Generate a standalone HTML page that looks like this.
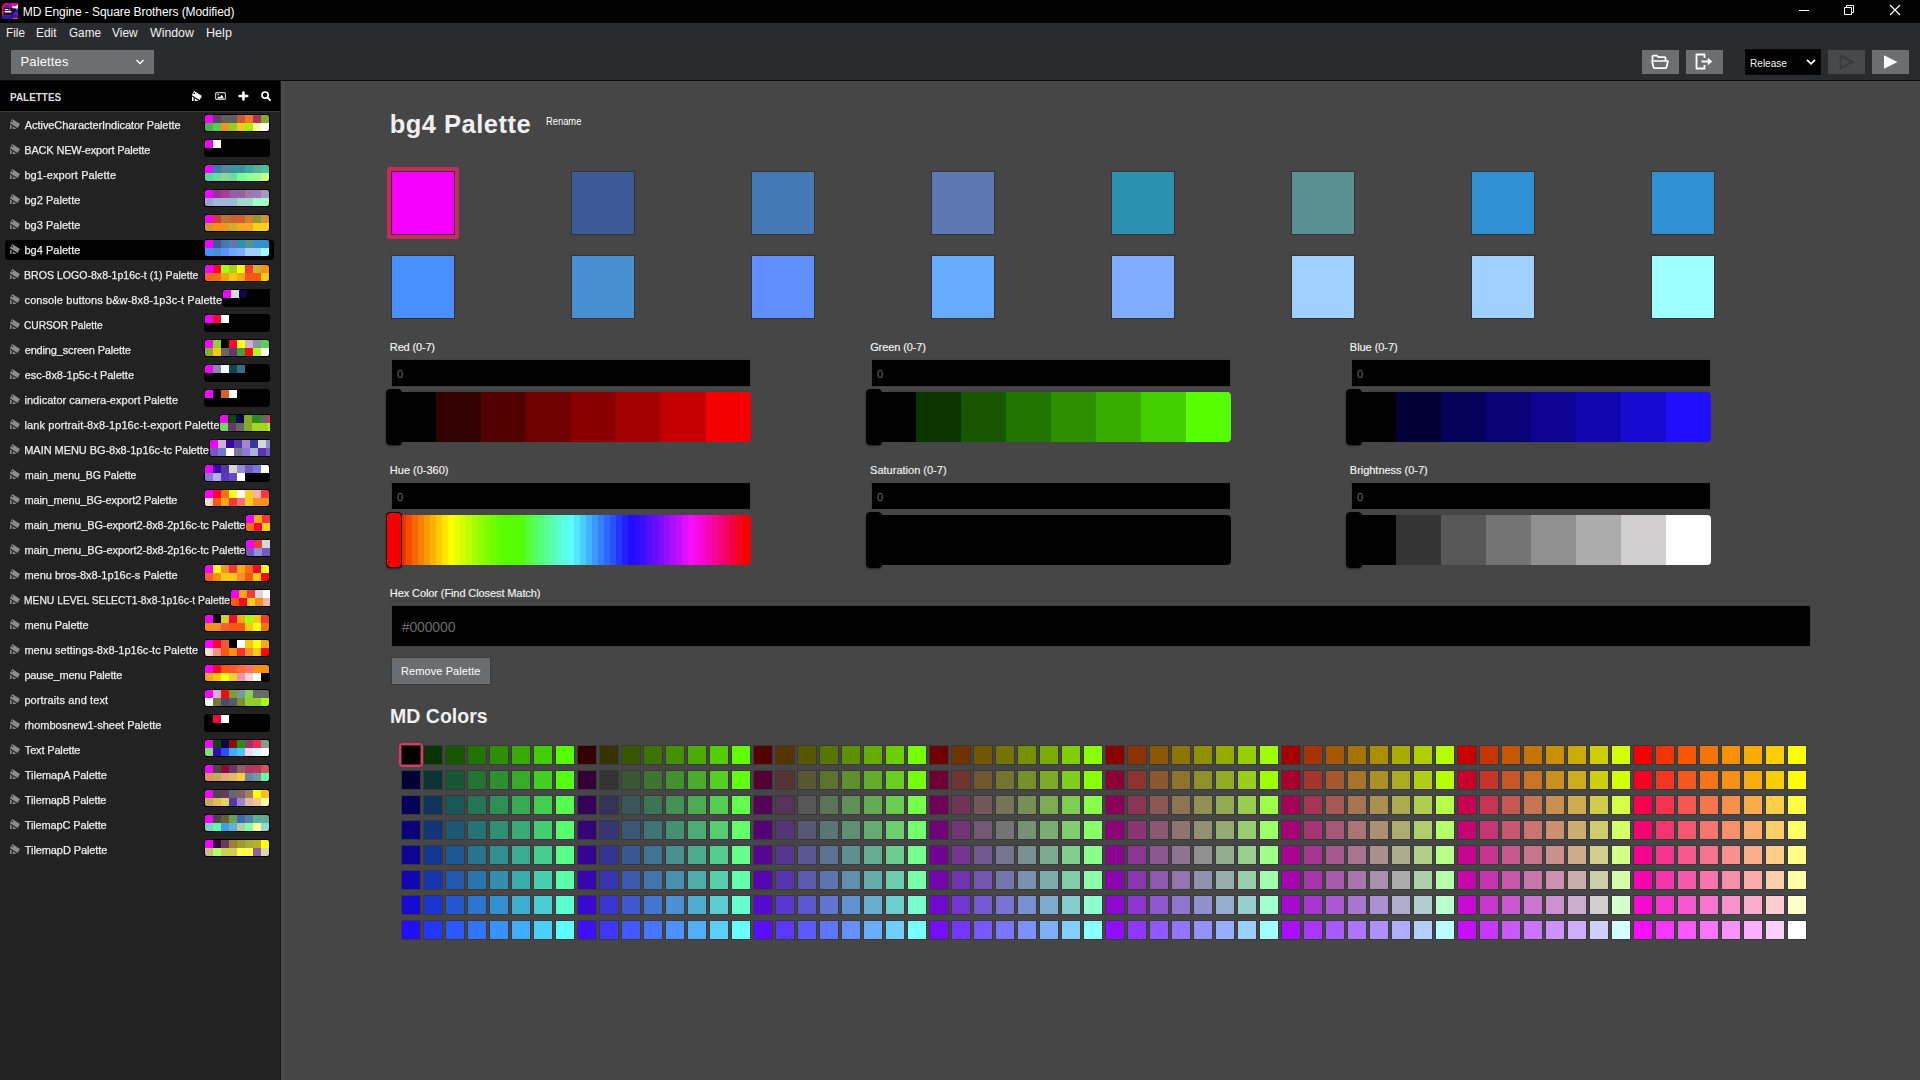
<!DOCTYPE html>
<html><head><meta charset="utf-8"><title>MD Engine - Square Brothers (Modified)</title>
<style>
*{box-sizing:border-box;margin:0;padding:0}
html,body{width:1920px;height:1080px;overflow:hidden;background:#464646}
body{font-family:"Liberation Sans",sans-serif;color:#eaeaea;position:relative;font-size:11px}
.a{position:absolute;white-space:nowrap}
#title{left:0;top:0;width:1920px;height:23px;background:#000}
#bar{left:0;top:23px;width:1920px;height:57px;background:#2a2b2e}
#barline{left:0;top:80px;width:1920px;height:1px;background:#0c0c0c}
#side{left:0;top:81px;width:280px;height:999px;background:#222;overflow:hidden}
#sideline{left:280px;top:81px;width:1px;height:999px;background:#171717}
#handle{left:281px;top:81px;width:4px;height:999px;background:#4a4a4a}
#shead{left:0;top:0;width:280px;height:30px;background:#000}
#sheadline{left:0;top:30px;width:280px;height:1px;background:#363636}
.t12{font-size:12px;line-height:14px}
.t13{font-size:13px;line-height:16px}
.t11{font-size:11px;line-height:14px}
.menu{top:25px;color:#f0f0f0}
.btn{background:#6c6f71;height:24px;top:50px}
.row{left:0;width:270px;height:25px;overflow:hidden}
.row .ic{left:10px;top:7px;width:10px;height:10px;fill:#8c8c8c}
.row .nm{left:25px;top:6px;font-size:11px;line-height:14px;color:#ececec;will-change:transform;-webkit-text-stroke:.25px #ececec}
.th{top:2px;width:66px;height:18px;border:1px solid #000;border-radius:3px;overflow:hidden;background:#000}
.th i{position:absolute;width:8px;height:8px}
.sel{left:5px;width:269px;height:20px;background:#000;border-radius:3px}
.sw{width:64px;height:64px;border:1px solid #333}
.lbl{font-size:11px;line-height:14px;color:#f4f4f4;-webkit-text-stroke:.15px #f4f4f4}
.inp{width:360px;height:28px;background:#000;border:1px solid #414141}
.inp span{position:absolute;left:5px;top:7px;font-size:11px;line-height:14px;color:#6c6c6c}
.sl{width:360px;height:50px;border-radius:0 4px 4px 0;overflow:hidden}
.sl i{position:absolute;top:0;height:50px}
.kn{width:16px;height:56px;border-radius:4px;background:#000;border:1px solid #000;box-shadow:0 1px 2px rgba(0,0,0,.5)}
.g{width:20px;height:20px;border:1px solid #393939}
</style></head><body>

<div id="title" class="a">
<svg class="a" style="left:2px;top:3px" width="16" height="16" viewBox="0 0 16 16"><defs><linearGradient id="lg" x1="0" y1="0" x2="0.250" y2="1"><stop offset="0" stop-color="#c8108c"/><stop offset=".35" stop-color="#8a1290"/><stop offset=".7" stop-color="#4a14a4"/><stop offset="1" stop-color="#3414a8"/></linearGradient><linearGradient id="lg2" x1="0" y1="1" x2="1" y2="0"><stop offset=".45" stop-color="#2a10a0" stop-opacity="0"/><stop offset=".6" stop-color="#7020c0" stop-opacity=".8"/><stop offset=".75" stop-color="#b010b0" stop-opacity="0"/></linearGradient></defs><path d="M0 16V5a5 5 0 0 1 5-5h11v16z" fill="url(#lg)"/><path d="M0 16V5a5 5 0 0 1 5-5h11v16z" fill="url(#lg2)"/><path d="M9 .2h7v3H9z" fill="#e808a8" opacity=".8"/><path d="M1.800 4.800 15.600 5.400 15 6.800 9.500 11.800 1.800 12z" fill="#160818" opacity=".88"/><path d="M.6 12.500V5A4.400 4.400 0 0 1 5 .6h1" fill="none" stroke="#ff1c1c" stroke-width="1.200"/><path d="M10 3.400q1.500-1 3 0 1.500-.9 3-1.600V5.200H11q-1-.5-1-1.800z" fill="#fff"/><path d="M13 5.200h3V6l-1 .8z" fill="#40f0d0"/><path d="M2.800 6h4.400q1 0 1 1.200H2.800zM2.600 8h5.800q1.200 0 1.400 1.400H2.600z" fill="#fff" opacity=".92"/><circle cx="6.400" cy="6.900" r=".7" fill="#160818"/><rect x="11" y="15" width="5" height="1" fill="#ff4a68"/></svg>
<div class="a" style="left:24px;top:4.800px;font-size:12px;line-height:14px;color:#fff"><span id="k_title" style="position:relative;letter-spacing:-0.066px;left:-1.26px;">MD Engine - Square Brothers (Modified)</span></div>
<svg class="a" style="left:1794px;top:0" width="120" height="23" viewBox="0 0 120 23" fill="none" stroke="#fff" stroke-width="1"><path d="M5 10.500h10"/><path d="M50.500 7.500h7v7h-7z"/><path d="M52.500 7.500v-2h7v7h-2"/><path d="M96 5l10 10M106 5l-10 10" stroke-width="1.200"/></svg>
</div>
<div id="bar" class="a"></div><div id="barline" class="a"></div>
<div class="a t13 menu" style="left:6px"><span id="k_menu0" style="position:relative;left:-0.23px;display:inline-block;transform:scaleX(0.9071);transform-origin:0 50%;">File</span></div>
<div class="a t13 menu" style="left:36px"><span id="k_menu1" style="position:relative;left:-0.23px;display:inline-block;transform:scaleX(0.9130);transform-origin:0 50%;">Edit</span></div>
<div class="a t13 menu" style="left:69px"><span id="k_menu2" style="position:relative;left:-0.33px;display:inline-block;transform:scaleX(0.9015);transform-origin:0 50%;">Game</span></div>
<div class="a t13 menu" style="left:112px"><span id="k_menu3" style="position:relative;left:-0.27px;display:inline-block;transform:scaleX(0.9180);transform-origin:0 50%;">View</span></div>
<div class="a t13 menu" style="left:150px"><span id="k_menu4" style="position:relative;left:-0.51px;display:inline-block;transform:scaleX(0.9489);transform-origin:0 50%;">Window</span></div>
<div class="a t13 menu" style="left:206px"><span id="k_menu5" style="position:relative;left:-0.38px;display:inline-block;transform:scaleX(0.9679);transform-origin:0 50%;">Help</span></div>
<div class="a btn" style="left:11px;width:143px"></div>
<div class="a t13" style="left:21px;top:54px;color:#fff"><span id="k_dd" style="position:relative;letter-spacing:0.135px;left:-0.44px;">Palettes</span></div>
<svg class="a" style="left:135px;top:58px" width="10" height="8" viewBox="0 0 10 8" fill="none" stroke="#fff" stroke-width="1.4"><path d="M1.500 2l3.500 3.500L8.500 2"/></svg>
<div class="a btn" style="left:1642px;width:37px"></div>
<svg class="a" style="left:1651px;top:54px" width="18" height="16" viewBox="0 0 18 16" fill="none" stroke="#fff" stroke-width="1.700" stroke-linejoin="round"><path d="M1.500 7V2.600q0-1 1-1H6l1.300 1.600h6.200q1 0 1 1V7"/><path d="M1 7h16l-1.500 6.300q-.2.900-1.200.9H3.700q-1 0-1.200-.9z"/></svg>
<div class="a btn" style="left:1686px;width:37px"></div>
<svg class="a" style="left:1695px;top:53px" width="20" height="17" viewBox="0 0 20 17" fill="none" stroke="#fff" stroke-width="1.800" stroke-linejoin="round"><path d="M9.500 5V1.500h-8v14h8V12"/><path d="M6.500 8.500H15" stroke-width="2"/><path d="M12.800 4.800l4.600 3.700-4.600 3.700z" fill="#fff" stroke="none"/></svg>
<div class="a" style="left:1745px;top:49px;width:76px;height:26px;background:#000;border:1px solid #070707"></div>
<div class="a t11" style="left:1749px;top:56px;color:#f2f2f2"><span id="k_rel" style="position:relative;left:0.64px;display:inline-block;transform:scaleX(0.9163);transform-origin:0 50%;">Release</span></div>
<svg class="a" style="left:1806px;top:58px" width="10" height="8" viewBox="0 0 10 8" fill="none" stroke="#fff" stroke-width="1.800"><path d="M1 1.800l4 4 4-4"/></svg>
<div class="a btn" style="left:1828px;width:37px;background:#47494b"></div>
<svg class="a" style="left:1838px;top:54px" width="18" height="16" viewBox="0 0 18 16" fill="none" stroke="#37393b" stroke-width="1.600"><path d="M2.500 1.500l12 6.500-12 6.500z"/></svg>
<div class="a btn" style="left:1872px;width:37px"></div>
<svg class="a" style="left:1882px;top:54px" width="18" height="16" viewBox="0 0 18 16" fill="#fff"><path d="M2 1.200l13.500 6.800L2 14.800z"/></svg>
<div id="side" class="a"><div id="shead" class="a"></div><div id="sheadline" class="a"></div>
<div class="a" style="left:10px;top:9px;font-size:11px;line-height:14px;font-weight:bold;color:#dedede"><span id="k_ph" style="position:relative;left:-0.51px;display:inline-block;transform:scaleX(0.9036);transform-origin:0 50%;">PALETTES</span></div>
<svg class="a" style="left:192px;top:10px;fill:#fff" width="10" height="10" viewBox="0 0 10 10"><path fill-rule="evenodd" d="M2.200 0 10 5 7.600 9-.2 4zM2.300 1.600a.7.700 0 1 0 .01 0z"/><path d="M0 5.400 1.600 6.500V10H0zM2.600 7.200 6.200 9.500 5.200 10H2.900z"/></svg>
<svg class="a" style="left:215px;top:11px" width="11" height="8" viewBox="0 0 11 8"><rect x=".6" y=".6" width="9.800" height="6.800" rx="1" fill="none" stroke="#c4c4c4" stroke-width="1.200"/><path d="M2 6.500 3.800 4.200 5 5.200 6.800 2.800 9 6.500z" fill="#fff"/><circle cx="3" cy="2.500" r=".8" fill="#fff"/></svg>
<svg class="a" style="left:238px;top:10px" width="10.800" height="10" viewBox="0 0 11 11" preserveAspectRatio="none" stroke="#fff" stroke-width="2.600" stroke-linecap="round"><path d="M5.500 1.600v7.800M1.600 5.500h7.800"/></svg>
<svg class="a" style="left:261px;top:10px" width="10" height="10" viewBox="0 0 10 10" fill="none" stroke="#fff" stroke-width="1.700" stroke-linecap="round"><circle cx="4.100" cy="4.100" r="3.100"/><path d="M6.500 6.500l2.600 2.600" stroke-width="1.900"/></svg>
<div class="a row" style="top:31px">
<svg class="a ic" viewBox="0 0 10 10"><path fill-rule="evenodd" d="M2.200 0 10 5 7.600 9-.2 4zM2.300 1.600a.7.700 0 1 0 .01 0z"/><path d="M0 5.400 1.600 6.500V10H0zM2.600 7.200 6.200 9.500 5.200 10H2.900z"/></svg>
<div class="a nm"><span id="k_p0" style="position:relative;letter-spacing:-0.066px;left:-0.20px;">ActiveCharacterIndicator Palette</span></div>
<div class="a th" style="left:204px">
<i style="left:0px;top:0px;background:#f600ff"></i>
<i style="left:8px;top:0px;background:#6b3a6b"></i>
<i style="left:16px;top:0px;background:#5e5e5e"></i>
<i style="left:24px;top:0px;background:#5e5e5e"></i>
<i style="left:32px;top:0px;background:#c85a32"></i>
<i style="left:40px;top:0px;background:#f07820"></i>
<i style="left:48px;top:0px;background:#b03060"></i>
<i style="left:56px;top:0px;background:#80b020"></i>
<i style="left:0px;top:8px;background:#50b050"></i>
<i style="left:8px;top:8px;background:#50d050"></i>
<i style="left:16px;top:8px;background:#f89020"></i>
<i style="left:24px;top:8px;background:#90d020"></i>
<i style="left:32px;top:8px;background:#f8c820"></i>
<i style="left:40px;top:8px;background:#a8f000"></i>
<i style="left:48px;top:8px;background:#ffffa0"></i>
<i style="left:56px;top:8px;background:#ffffff"></i>
</div></div>
<div class="a row" style="top:56px">
<svg class="a ic" viewBox="0 0 10 10"><path fill-rule="evenodd" d="M2.200 0 10 5 7.600 9-.2 4zM2.300 1.600a.7.700 0 1 0 .01 0z"/><path d="M0 5.400 1.600 6.500V10H0zM2.600 7.200 6.200 9.500 5.200 10H2.900z"/></svg>
<div class="a nm"><span id="k_p1" style="position:relative;letter-spacing:-0.177px;left:-0.76px;">BACK NEW-export Palette</span></div>
<div class="a th" style="left:204px">
<i style="left:0px;top:0px;background:#f600ff"></i>
<i style="left:8px;top:0px;background:#ffffff"></i>
</div></div>
<div class="a row" style="top:81px">
<svg class="a ic" viewBox="0 0 10 10"><path fill-rule="evenodd" d="M2.200 0 10 5 7.600 9-.2 4zM2.300 1.600a.7.700 0 1 0 .01 0z"/><path d="M0 5.400 1.600 6.500V10H0zM2.600 7.200 6.200 9.500 5.200 10H2.900z"/></svg>
<div class="a nm"><span id="k_p2" style="position:relative;letter-spacing:0.102px;left:-0.64px;">bg1-export Palette</span></div>
<div class="a th" style="left:204px">
<i style="left:0px;top:0px;background:#f600ff"></i>
<i style="left:8px;top:0px;background:#3080a0"></i>
<i style="left:16px;top:0px;background:#6080a0"></i>
<i style="left:24px;top:0px;background:#3098a0"></i>
<i style="left:32px;top:0px;background:#4090a0"></i>
<i style="left:40px;top:0px;background:#38a8a0"></i>
<i style="left:48px;top:0px;background:#60a898"></i>
<i style="left:56px;top:0px;background:#40c898"></i>
<i style="left:0px;top:8px;background:#50d8a0"></i>
<i style="left:8px;top:8px;background:#70d8a0"></i>
<i style="left:16px;top:8px;background:#88d898"></i>
<i style="left:24px;top:8px;background:#70d8a0"></i>
<i style="left:32px;top:8px;background:#78ff98"></i>
<i style="left:40px;top:8px;background:#90ff98"></i>
<i style="left:48px;top:8px;background:#98ff90"></i>
<i style="left:56px;top:8px;background:#d0ff88"></i>
</div></div>
<div class="a row" style="top:106px">
<svg class="a ic" viewBox="0 0 10 10"><path fill-rule="evenodd" d="M2.200 0 10 5 7.600 9-.2 4zM2.300 1.600a.7.700 0 1 0 .01 0z"/><path d="M0 5.400 1.600 6.500V10H0zM2.600 7.200 6.200 9.500 5.200 10H2.900z"/></svg>
<div class="a nm"><span id="k_p3" style="position:relative;letter-spacing:0.034px;left:-0.64px;">bg2 Palette</span></div>
<div class="a th" style="left:204px">
<i style="left:0px;top:0px;background:#f600ff"></i>
<i style="left:8px;top:0px;background:#903898"></i>
<i style="left:16px;top:0px;background:#b03898"></i>
<i style="left:24px;top:0px;background:#9060a0"></i>
<i style="left:32px;top:0px;background:#9860a0"></i>
<i style="left:40px;top:0px;background:#a078a8"></i>
<i style="left:48px;top:0px;background:#a078c0"></i>
<i style="left:56px;top:0px;background:#a898b8"></i>
<i style="left:0px;top:8px;background:#a0a0d8"></i>
<i style="left:8px;top:8px;background:#a0b8d8"></i>
<i style="left:16px;top:8px;background:#a0b8d8"></i>
<i style="left:24px;top:8px;background:#a0b8d8"></i>
<i style="left:32px;top:8px;background:#a0d8d0"></i>
<i style="left:40px;top:8px;background:#a0d8d0"></i>
<i style="left:48px;top:8px;background:#a0ffc8"></i>
<i style="left:56px;top:8px;background:#a0ffc8"></i>
</div></div>
<div class="a row" style="top:131px">
<svg class="a ic" viewBox="0 0 10 10"><path fill-rule="evenodd" d="M2.200 0 10 5 7.600 9-.2 4zM2.300 1.600a.7.700 0 1 0 .01 0z"/><path d="M0 5.400 1.600 6.500V10H0zM2.600 7.200 6.200 9.500 5.200 10H2.900z"/></svg>
<div class="a nm"><span id="k_p4" style="position:relative;letter-spacing:0.034px;left:-0.64px;">bg3 Palette</span></div>
<div class="a th" style="left:204px">
<i style="left:0px;top:0px;background:#f600ff"></i>
<i style="left:8px;top:0px;background:#d83838"></i>
<i style="left:16px;top:0px;background:#b07830"></i>
<i style="left:24px;top:0px;background:#d06030"></i>
<i style="left:32px;top:0px;background:#d06030"></i>
<i style="left:40px;top:0px;background:#d08030"></i>
<i style="left:48px;top:0px;background:#909830"></i>
<i style="left:56px;top:0px;background:#d09830"></i>
<i style="left:0px;top:8px;background:#d09828"></i>
<i style="left:8px;top:8px;background:#f89020"></i>
<i style="left:16px;top:8px;background:#f89020"></i>
<i style="left:24px;top:8px;background:#c8b028"></i>
<i style="left:32px;top:8px;background:#f8a820"></i>
<i style="left:40px;top:8px;background:#f8a820"></i>
<i style="left:48px;top:8px;background:#ffd018"></i>
<i style="left:56px;top:8px;background:#ffd018"></i>
</div></div>
<div class="a sel" style="top:159px"></div>
<div class="a row" style="top:156px">
<svg class="a ic" viewBox="0 0 10 10"><path fill-rule="evenodd" d="M2.200 0 10 5 7.600 9-.2 4zM2.300 1.600a.7.700 0 1 0 .01 0z"/><path d="M0 5.400 1.600 6.500V10H0zM2.600 7.200 6.200 9.500 5.200 10H2.900z"/></svg>
<div class="a nm"><span id="k_p5" style="position:relative;letter-spacing:0.032px;left:-0.63px;">bg4 Palette</span></div>
<div class="a th" style="left:204px">
<i style="left:0px;top:0px;background:#f600ff"></i>
<i style="left:8px;top:0px;background:#3c5a96"></i>
<i style="left:16px;top:0px;background:#4478b4"></i>
<i style="left:24px;top:0px;background:#5e78b4"></i>
<i style="left:32px;top:0px;background:#2c90b0"></i>
<i style="left:40px;top:0px;background:#5a9090"></i>
<i style="left:48px;top:0px;background:#3090d2"></i>
<i style="left:56px;top:0px;background:#3090d2"></i>
<i style="left:0px;top:8px;background:#4890ff"></i>
<i style="left:8px;top:8px;background:#4890d2"></i>
<i style="left:16px;top:8px;background:#6090ff"></i>
<i style="left:24px;top:8px;background:#68acff"></i>
<i style="left:32px;top:8px;background:#80acff"></i>
<i style="left:40px;top:8px;background:#a0d0ff"></i>
<i style="left:48px;top:8px;background:#a0d0ff"></i>
<i style="left:56px;top:8px;background:#a0ffff"></i>
</div></div>
<div class="a row" style="top:181px">
<svg class="a ic" viewBox="0 0 10 10"><path fill-rule="evenodd" d="M2.200 0 10 5 7.600 9-.2 4zM2.300 1.600a.7.700 0 1 0 .01 0z"/><path d="M0 5.400 1.600 6.500V10H0zM2.600 7.200 6.200 9.500 5.200 10H2.900z"/></svg>
<div class="a nm"><span id="k_p6" style="position:relative;left:-0.59px;display:inline-block;transform:scaleX(0.9610);transform-origin:0 50%;">BROS LOGO-8x8-1p16c-t (1) Palette</span></div>
<div class="a th" style="left:204px">
<i style="left:0px;top:0px;background:#f600ff"></i>
<i style="left:8px;top:0px;background:#f80830"></i>
<i style="left:16px;top:0px;background:#a0ff10"></i>
<i style="left:24px;top:0px;background:#a8d020"></i>
<i style="left:32px;top:0px;background:#ffff10"></i>
<i style="left:40px;top:0px;background:#f83838"></i>
<i style="left:48px;top:0px;background:#d0b030"></i>
<i style="left:56px;top:0px;background:#f89010"></i>
<i style="left:0px;top:8px;background:#f86030"></i>
<i style="left:8px;top:8px;background:#f87010"></i>
<i style="left:16px;top:8px;background:#f8a010"></i>
<i style="left:24px;top:8px;background:#f8c810"></i>
<i style="left:32px;top:8px;background:#f8a818"></i>
<i style="left:40px;top:8px;background:#f85810"></i>
<i style="left:48px;top:8px;background:#f85810"></i>
<i style="left:56px;top:8px;background:#f8c810"></i>
</div></div>
<div class="a row" style="top:206px">
<svg class="a ic" viewBox="0 0 10 10"><path fill-rule="evenodd" d="M2.200 0 10 5 7.600 9-.2 4zM2.300 1.600a.7.700 0 1 0 .01 0z"/><path d="M0 5.400 1.600 6.500V10H0zM2.600 7.200 6.200 9.500 5.200 10H2.900z"/></svg>
<div class="a nm"><span id="k_p7" style="position:relative;letter-spacing:0.081px;left:-0.45px;">console buttons b&amp;w-8x8-1p3c-t Palette</span></div>
<div class="a th" style="left:222px">
<i style="left:0px;top:0px;background:#f600ff"></i>
<i style="left:8px;top:0px;background:#d8d8d8"></i>
<i style="left:16px;top:0px;background:#080848"></i>
</div></div>
<div class="a row" style="top:231px">
<svg class="a ic" viewBox="0 0 10 10"><path fill-rule="evenodd" d="M2.200 0 10 5 7.600 9-.2 4zM2.300 1.600a.7.700 0 1 0 .01 0z"/><path d="M0 5.400 1.600 6.500V10H0zM2.600 7.200 6.200 9.500 5.200 10H2.900z"/></svg>
<div class="a nm"><span id="k_p8" style="position:relative;left:-0.62px;display:inline-block;transform:scaleX(0.9253);transform-origin:0 50%;">CURSOR Palette</span></div>
<div class="a th" style="left:204px">
<i style="left:0px;top:0px;background:#f600ff"></i>
<i style="left:8px;top:0px;background:#f80830"></i>
<i style="left:16px;top:0px;background:#ffffff"></i>
</div></div>
<div class="a row" style="top:256px">
<svg class="a ic" viewBox="0 0 10 10"><path fill-rule="evenodd" d="M2.200 0 10 5 7.600 9-.2 4zM2.300 1.600a.7.700 0 1 0 .01 0z"/><path d="M0 5.400 1.600 6.500V10H0zM2.600 7.200 6.200 9.500 5.200 10H2.900z"/></svg>
<div class="a nm"><span id="k_p9" style="position:relative;letter-spacing:-0.158px;left:-0.34px;">ending_screen Palette</span></div>
<div class="a th" style="left:204px">
<i style="left:0px;top:0px;background:#f600ff"></i>
<i style="left:8px;top:0px;background:#90d030"></i>
<i style="left:24px;top:0px;background:#f80838"></i>
<i style="left:32px;top:0px;background:#ffff10"></i>
<i style="left:40px;top:0px;background:#d0b0d0"></i>
<i style="left:48px;top:0px;background:#8898a0"></i>
<i style="left:56px;top:0px;background:#58d058"></i>
<i style="left:0px;top:8px;background:#88b030"></i>
<i style="left:8px;top:8px;background:#ffc810"></i>
<i style="left:16px;top:8px;background:#686868"></i>
<i style="left:24px;top:8px;background:#683868"></i>
<i style="left:32px;top:8px;background:#40a040"></i>
<i style="left:40px;top:8px;background:#f80808"></i>
<i style="left:48px;top:8px;background:#b0ff10"></i>
<i style="left:56px;top:8px;background:#ffffff"></i>
</div></div>
<div class="a row" style="top:281px">
<svg class="a ic" viewBox="0 0 10 10"><path fill-rule="evenodd" d="M2.200 0 10 5 7.600 9-.2 4zM2.300 1.600a.7.700 0 1 0 .01 0z"/><path d="M0 5.400 1.600 6.500V10H0zM2.600 7.200 6.200 9.500 5.200 10H2.900z"/></svg>
<div class="a nm"><span id="k_p10" style="position:relative;letter-spacing:-0.034px;left:-0.34px;">esc-8x8-1p5c-t Palette</span></div>
<div class="a th" style="left:204px">
<i style="left:0px;top:0px;background:#f600ff"></i>
<i style="left:8px;top:0px;background:#8888a8"></i>
<i style="left:16px;top:0px;background:#ffffff"></i>
<i style="left:24px;top:0px;background:#0c4848"></i>
<i style="left:32px;top:0px;background:#406888"></i>
</div></div>
<div class="a row" style="top:306px">
<svg class="a ic" viewBox="0 0 10 10"><path fill-rule="evenodd" d="M2.200 0 10 5 7.600 9-.2 4zM2.300 1.600a.7.700 0 1 0 .01 0z"/><path d="M0 5.400 1.600 6.500V10H0zM2.600 7.200 6.200 9.500 5.200 10H2.900z"/></svg>
<div class="a nm"><span id="k_p11" style="position:relative;letter-spacing:0.023px;left:-0.54px;">indicator camera-export Palette</span></div>
<div class="a th" style="left:204px">
<i style="left:0px;top:0px;background:#f600ff"></i>
<i style="left:16px;top:0px;background:#d86030"></i>
<i style="left:24px;top:0px;background:#ffffff"></i>
</div></div>
<div class="a row" style="top:331px">
<svg class="a ic" viewBox="0 0 10 10"><path fill-rule="evenodd" d="M2.200 0 10 5 7.600 9-.2 4zM2.300 1.600a.7.700 0 1 0 .01 0z"/><path d="M0 5.400 1.600 6.500V10H0zM2.600 7.200 6.200 9.500 5.200 10H2.900z"/></svg>
<div class="a nm"><span id="k_p12" style="position:relative;letter-spacing:0.112px;left:-0.64px;">lank portrait-8x8-1p16c-t-export Palette</span></div>
<div class="a th" style="left:219px">
<i style="left:0px;top:0px;background:#f600ff"></i>
<i style="left:8px;top:0px;background:#0c4808"></i>
<i style="left:16px;top:0px;background:#080848"></i>
<i style="left:24px;top:0px;background:#88a828"></i>
<i style="left:32px;top:0px;background:#289010"></i>
<i style="left:40px;top:0px;background:#686868"></i>
<i style="left:48px;top:0px;background:#f82858"></i>
<i style="left:56px;top:0px;background:#f82858"></i>
<i style="left:0px;top:8px;background:#70d868"></i>
<i style="left:8px;top:8px;background:#683868"></i>
<i style="left:16px;top:8px;background:#686868"></i>
<i style="left:24px;top:8px;background:#88a828"></i>
<i style="left:32px;top:8px;background:#a0d820"></i>
<i style="left:40px;top:8px;background:#a0d820"></i>
<i style="left:48px;top:8px;background:#b0ff10"></i>
<i style="left:56px;top:8px;background:#b0ff10"></i>
</div></div>
<div class="a row" style="top:356px">
<svg class="a ic" viewBox="0 0 10 10"><path fill-rule="evenodd" d="M2.200 0 10 5 7.600 9-.2 4zM2.300 1.600a.7.700 0 1 0 .01 0z"/><path d="M0 5.400 1.600 6.500V10H0zM2.600 7.200 6.200 9.500 5.200 10H2.900z"/></svg>
<div class="a nm"><span id="k_p13" style="position:relative;letter-spacing:-0.054px;left:-0.76px;">MAIN MENU BG-8x8-1p16c-tc Palette</span></div>
<div class="a th" style="left:209px">
<i style="left:0px;top:0px;background:#f600ff"></i>
<i style="left:8px;top:0px;background:#d0b0d0"></i>
<i style="left:16px;top:0px;background:#3808a0"></i>
<i style="left:24px;top:0px;background:#5838a0"></i>
<i style="left:32px;top:0px;background:#a088d0"></i>
<i style="left:40px;top:0px;background:#3838a0"></i>
<i style="left:48px;top:0px;background:#d8d8d8"></i>
<i style="left:56px;top:0px;background:#8890d8"></i>
<i style="left:0px;top:8px;background:#7858c0"></i>
<i style="left:8px;top:8px;background:#7078d8"></i>
<i style="left:16px;top:8px;background:#ffffff"></i>
<i style="left:24px;top:8px;background:#787890"></i>
<i style="left:32px;top:8px;background:#9078d8"></i>
<i style="left:40px;top:8px;background:#b0b0d8"></i>
<i style="left:48px;top:8px;background:#5838b0"></i>
<i style="left:56px;top:8px;background:#7858c0"></i>
</div></div>
<div class="a row" style="top:381px">
<svg class="a ic" viewBox="0 0 10 10"><path fill-rule="evenodd" d="M2.200 0 10 5 7.600 9-.2 4zM2.300 1.600a.7.700 0 1 0 .01 0z"/><path d="M0 5.400 1.600 6.500V10H0zM2.600 7.200 6.200 9.500 5.200 10H2.900z"/></svg>
<div class="a nm"><span id="k_p14" style="position:relative;left:-0.41px;display:inline-block;transform:scaleX(0.9542);transform-origin:0 50%;">main_menu_BG Palette</span></div>
<div class="a th" style="left:204px">
<i style="left:0px;top:0px;background:#f600ff"></i>
<i style="left:8px;top:0px;background:#3808b0"></i>
<i style="left:16px;top:0px;background:#5838a8"></i>
<i style="left:24px;top:0px;background:#d8d8d0"></i>
<i style="left:32px;top:0px;background:#9090d8"></i>
<i style="left:40px;top:0px;background:#7858c0"></i>
<i style="left:48px;top:0px;background:#7878e0"></i>
<i style="left:56px;top:0px;background:#ffffff"></i>
<i style="left:0px;top:8px;background:#8878d8"></i>
<i style="left:8px;top:8px;background:#b0b0e0"></i>
<i style="left:16px;top:8px;background:#5838c0"></i>
<i style="left:24px;top:8px;background:#6848c0"></i>
<i style="left:32px;top:8px;background:#ffffff"></i>
</div></div>
<div class="a row" style="top:406px">
<svg class="a ic" viewBox="0 0 10 10"><path fill-rule="evenodd" d="M2.200 0 10 5 7.600 9-.2 4zM2.300 1.600a.7.700 0 1 0 .01 0z"/><path d="M0 5.400 1.600 6.500V10H0zM2.600 7.200 6.200 9.500 5.200 10H2.900z"/></svg>
<div class="a nm"><span id="k_p15" style="position:relative;letter-spacing:-0.153px;left:-0.60px;">main_menu_BG-export2 Palette</span></div>
<div class="a th" style="left:204px">
<i style="left:0px;top:0px;background:#f600ff"></i>
<i style="left:8px;top:0px;background:#f80830"></i>
<i style="left:16px;top:0px;background:#f87010"></i>
<i style="left:24px;top:0px;background:#ffff10"></i>
<i style="left:32px;top:0px;background:#ffffff"></i>
<i style="left:40px;top:0px;background:#ffd018"></i>
<i style="left:48px;top:0px;background:#f8b0b0"></i>
<i style="left:56px;top:0px;background:#f83838"></i>
<i style="left:0px;top:8px;background:#ffd8d0"></i>
<i style="left:8px;top:8px;background:#f85810"></i>
<i style="left:16px;top:8px;background:#f8a818"></i>
<i style="left:24px;top:8px;background:#f83838"></i>
<i style="left:32px;top:8px;background:#f87078"></i>
<i style="left:40px;top:8px;background:#ffd018"></i>
<i style="left:48px;top:8px;background:#f89030"></i>
<i style="left:56px;top:8px;background:#f89010"></i>
</div></div>
<div class="a row" style="top:431px">
<svg class="a ic" viewBox="0 0 10 10"><path fill-rule="evenodd" d="M2.200 0 10 5 7.600 9-.2 4zM2.300 1.600a.7.700 0 1 0 .01 0z"/><path d="M0 5.400 1.600 6.500V10H0zM2.600 7.200 6.200 9.500 5.200 10H2.900z"/></svg>
<div class="a nm"><span id="k_p16" style="position:relative;letter-spacing:-0.083px;left:-0.60px;">main_menu_BG-export2-8x8-2p16c-tc Palette</span></div>
<div class="a th" style="left:245px">
<i style="left:0px;top:0px;background:#f600ff"></i>
<i style="left:8px;top:0px;background:#f8a818"></i>
<i style="left:16px;top:0px;background:#f83838"></i>
<i style="left:24px;top:0px;background:#ffff10"></i>
<i style="left:32px;top:0px;background:#ffffff"></i>
<i style="left:40px;top:0px;background:#ffd018"></i>
<i style="left:48px;top:0px;background:#f8b0b0"></i>
<i style="left:56px;top:0px;background:#f83838"></i>
<i style="left:0px;top:8px;background:#f87010"></i>
<i style="left:8px;top:8px;background:#f80830"></i>
<i style="left:16px;top:8px;background:#ffd018"></i>
<i style="left:24px;top:8px;background:#f83838"></i>
<i style="left:32px;top:8px;background:#f87078"></i>
<i style="left:40px;top:8px;background:#ffd018"></i>
<i style="left:48px;top:8px;background:#f89030"></i>
<i style="left:56px;top:8px;background:#f89010"></i>
</div></div>
<div class="a row" style="top:456px">
<svg class="a ic" viewBox="0 0 10 10"><path fill-rule="evenodd" d="M2.200 0 10 5 7.600 9-.2 4zM2.300 1.600a.7.700 0 1 0 .01 0z"/><path d="M0 5.400 1.600 6.500V10H0zM2.600 7.200 6.200 9.500 5.200 10H2.900z"/></svg>
<div class="a nm"><span id="k_p17" style="position:relative;letter-spacing:-0.083px;left:-0.60px;">main_menu_BG-export2-8x8-2p16c-tc Palette</span></div>
<div class="a th" style="left:245px">
<i style="left:0px;top:0px;background:#f600ff"></i>
<i style="left:8px;top:0px;background:#f83838"></i>
<i style="left:16px;top:0px;background:#d8d8d8"></i>
<i style="left:24px;top:0px;background:#ffff10"></i>
<i style="left:32px;top:0px;background:#ffffff"></i>
<i style="left:40px;top:0px;background:#ffd018"></i>
<i style="left:48px;top:0px;background:#f8b0b0"></i>
<i style="left:56px;top:0px;background:#f83838"></i>
<i style="left:0px;top:8px;background:#7858c0"></i>
<i style="left:8px;top:8px;background:#9090d8"></i>
<i style="left:16px;top:8px;background:#7858c0"></i>
<i style="left:24px;top:8px;background:#f83838"></i>
<i style="left:32px;top:8px;background:#f87078"></i>
<i style="left:40px;top:8px;background:#ffd018"></i>
<i style="left:48px;top:8px;background:#f89030"></i>
<i style="left:56px;top:8px;background:#f89010"></i>
</div></div>
<div class="a row" style="top:481px">
<svg class="a ic" viewBox="0 0 10 10"><path fill-rule="evenodd" d="M2.200 0 10 5 7.600 9-.2 4zM2.300 1.600a.7.700 0 1 0 .01 0z"/><path d="M0 5.400 1.600 6.500V10H0zM2.600 7.200 6.200 9.500 5.200 10H2.900z"/></svg>
<div class="a nm"><span id="k_p18" style="position:relative;letter-spacing:-0.011px;left:-0.60px;">menu bros-8x8-1p16c-s Palette</span></div>
<div class="a th" style="left:204px">
<i style="left:0px;top:0px;background:#f600ff"></i>
<i style="left:8px;top:0px;background:#ffff10"></i>
<i style="left:16px;top:0px;background:#f89030"></i>
<i style="left:24px;top:0px;background:#f83838"></i>
<i style="left:32px;top:0px;background:#f8a818"></i>
<i style="left:40px;top:0px;background:#f87010"></i>
<i style="left:48px;top:0px;background:#f80830"></i>
<i style="left:56px;top:0px;background:#ffff10"></i>
<i style="left:0px;top:8px;background:#f86030"></i>
<i style="left:8px;top:8px;background:#f89010"></i>
<i style="left:16px;top:8px;background:#ffc810"></i>
<i style="left:24px;top:8px;background:#ffc810"></i>
<i style="left:32px;top:8px;background:#f89030"></i>
<i style="left:40px;top:8px;background:#f85810"></i>
<i style="left:48px;top:8px;background:#ffc810"></i>
<i style="left:56px;top:8px;background:#f80808"></i>
</div></div>
<div class="a row" style="top:506px">
<svg class="a ic" viewBox="0 0 10 10"><path fill-rule="evenodd" d="M2.200 0 10 5 7.600 9-.2 4zM2.300 1.600a.7.700 0 1 0 .01 0z"/><path d="M0 5.400 1.600 6.500V10H0zM2.600 7.200 6.200 9.500 5.200 10H2.900z"/></svg>
<div class="a nm"><span id="k_p19" style="position:relative;left:-0.54px;display:inline-block;transform:scaleX(0.9354);transform-origin:0 50%;">MENU LEVEL SELECT1-8x8-1p16c-t Palette</span></div>
<div class="a th" style="left:230px">
<i style="left:0px;top:0px;background:#f600ff"></i>
<i style="left:8px;top:0px;background:#f8a818"></i>
<i style="left:16px;top:0px;background:#f83838"></i>
<i style="left:24px;top:0px;background:#d8d8d8"></i>
<i style="left:32px;top:0px;background:#ffffff"></i>
<i style="left:40px;top:0px;background:#ffd018"></i>
<i style="left:48px;top:0px;background:#f8b0b0"></i>
<i style="left:56px;top:0px;background:#f83838"></i>
<i style="left:0px;top:8px;background:#f85810"></i>
<i style="left:8px;top:8px;background:#f80830"></i>
<i style="left:16px;top:8px;background:#ffd018"></i>
<i style="left:24px;top:8px;background:#f89010"></i>
<i style="left:32px;top:8px;background:#f8b0b0"></i>
<i style="left:40px;top:8px;background:#ffd018"></i>
<i style="left:48px;top:8px;background:#f89030"></i>
<i style="left:56px;top:8px;background:#f89010"></i>
</div></div>
<div class="a row" style="top:531px">
<svg class="a ic" viewBox="0 0 10 10"><path fill-rule="evenodd" d="M2.200 0 10 5 7.600 9-.2 4zM2.300 1.600a.7.700 0 1 0 .01 0z"/><path d="M0 5.400 1.600 6.500V10H0zM2.600 7.200 6.200 9.500 5.200 10H2.900z"/></svg>
<div class="a nm"><span id="k_p20" style="position:relative;letter-spacing:-0.049px;left:-0.60px;">menu Palette</span></div>
<div class="a th" style="left:204px">
<i style="left:0px;top:0px;background:#f600ff"></i>
<i style="left:16px;top:0px;background:#d0d030"></i>
<i style="left:24px;top:0px;background:#f80830"></i>
<i style="left:32px;top:0px;background:#f8a818"></i>
<i style="left:40px;top:0px;background:#a0ff10"></i>
<i style="left:48px;top:0px;background:#ffc810"></i>
<i style="left:56px;top:0px;background:#f83838"></i>
<i style="left:0px;top:8px;background:#f89010"></i>
<i style="left:8px;top:8px;background:#f89030"></i>
<i style="left:16px;top:8px;background:#f86030"></i>
<i style="left:24px;top:8px;background:#f85810"></i>
<i style="left:32px;top:8px;background:#f85810"></i>
<i style="left:40px;top:8px;background:#ffc810"></i>
<i style="left:48px;top:8px;background:#ffff10"></i>
<i style="left:56px;top:8px;background:#f87010"></i>
</div></div>
<div class="a row" style="top:556px">
<svg class="a ic" viewBox="0 0 10 10"><path fill-rule="evenodd" d="M2.200 0 10 5 7.600 9-.2 4zM2.300 1.600a.7.700 0 1 0 .01 0z"/><path d="M0 5.400 1.600 6.500V10H0zM2.600 7.200 6.200 9.500 5.200 10H2.900z"/></svg>
<div class="a nm"><span id="k_p21" style="position:relative;letter-spacing:0.020px;left:-0.60px;">menu settings-8x8-1p16c-tc Palette</span></div>
<div class="a th" style="left:204px">
<i style="left:0px;top:0px;background:#f600ff"></i>
<i style="left:8px;top:0px;background:#f80830"></i>
<i style="left:16px;top:0px;background:#f85838"></i>
<i style="left:32px;top:0px;background:#ffffff"></i>
<i style="left:40px;top:0px;background:#ffc810"></i>
<i style="left:48px;top:0px;background:#ffff10"></i>
<i style="left:56px;top:0px;background:#f8a818"></i>
<i style="left:0px;top:8px;background:#ffd8d0"></i>
<i style="left:8px;top:8px;background:#f89088"></i>
<i style="left:16px;top:8px;background:#f85810"></i>
<i style="left:24px;top:8px;background:#f89010"></i>
<i style="left:32px;top:8px;background:#f83030"></i>
<i style="left:40px;top:8px;background:#f89030"></i>
<i style="left:48px;top:8px;background:#ffc810"></i>
<i style="left:56px;top:8px;background:#f80808"></i>
</div></div>
<div class="a row" style="top:581px">
<svg class="a ic" viewBox="0 0 10 10"><path fill-rule="evenodd" d="M2.200 0 10 5 7.600 9-.2 4zM2.300 1.600a.7.700 0 1 0 .01 0z"/><path d="M0 5.400 1.600 6.500V10H0zM2.600 7.200 6.200 9.500 5.200 10H2.900z"/></svg>
<div class="a nm"><span id="k_p22" style="position:relative;letter-spacing:-0.173px;left:-0.64px;">pause_menu Palette</span></div>
<div class="a th" style="left:204px">
<i style="left:0px;top:0px;background:#f600ff"></i>
<i style="left:8px;top:0px;background:#f80830"></i>
<i style="left:16px;top:0px;background:#f85810"></i>
<i style="left:24px;top:0px;background:#f85838"></i>
<i style="left:32px;top:0px;background:#f87030"></i>
<i style="left:40px;top:0px;background:#f87078"></i>
<i style="left:48px;top:0px;background:#f89010"></i>
<i style="left:56px;top:0px;background:#f89010"></i>
<i style="left:0px;top:8px;background:#f8a818"></i>
<i style="left:8px;top:8px;background:#ffc810"></i>
<i style="left:16px;top:8px;background:#ffff10"></i>
<i style="left:24px;top:8px;background:#f8d030"></i>
<i style="left:32px;top:8px;background:#f890b0"></i>
<i style="left:40px;top:8px;background:#f8d0d0"></i>
<i style="left:48px;top:8px;background:#ffffff"></i>
</div></div>
<div class="a row" style="top:606px">
<svg class="a ic" viewBox="0 0 10 10"><path fill-rule="evenodd" d="M2.200 0 10 5 7.600 9-.2 4zM2.300 1.600a.7.700 0 1 0 .01 0z"/><path d="M0 5.400 1.600 6.500V10H0zM2.600 7.200 6.200 9.500 5.200 10H2.900z"/></svg>
<div class="a nm"><span id="k_p23" style="position:relative;letter-spacing:0.109px;left:-0.62px;">portraits and text</span></div>
<div class="a th" style="left:204px">
<i style="left:0px;top:0px;background:#f600ff"></i>
<i style="left:8px;top:0px;background:#d0b0d8"></i>
<i style="left:16px;top:0px;background:#f80808"></i>
<i style="left:24px;top:0px;background:#78a030"></i>
<i style="left:32px;top:0px;background:#7898a0"></i>
<i style="left:40px;top:0px;background:#88d050"></i>
<i style="left:48px;top:0px;background:#686868"></i>
<i style="left:56px;top:0px;background:#686868"></i>
<i style="left:0px;top:8px;background:#ffffff"></i>
<i style="left:8px;top:8px;background:#787838"></i>
<i style="left:16px;top:8px;background:#504868"></i>
<i style="left:24px;top:8px;background:#585868"></i>
<i style="left:32px;top:8px;background:#789030"></i>
<i style="left:40px;top:8px;background:#90d028"></i>
<i style="left:48px;top:8px;background:#90d028"></i>
<i style="left:56px;top:8px;background:#a8ff10"></i>
</div></div>
<div class="a row" style="top:631px">
<svg class="a ic" viewBox="0 0 10 10"><path fill-rule="evenodd" d="M2.200 0 10 5 7.600 9-.2 4zM2.300 1.600a.7.700 0 1 0 .01 0z"/><path d="M0 5.400 1.600 6.500V10H0zM2.600 7.200 6.200 9.500 5.200 10H2.900z"/></svg>
<div class="a nm"><span id="k_p24" style="position:relative;left:-0.60px;">rhombosnew1-sheet Palette</span></div>
<div class="a th" style="left:204px">
<i style="left:8px;top:0px;background:#f80830"></i>
<i style="left:16px;top:0px;background:#ffffff"></i>
</div></div>
<div class="a row" style="top:656px">
<svg class="a ic" viewBox="0 0 10 10"><path fill-rule="evenodd" d="M2.200 0 10 5 7.600 9-.2 4zM2.300 1.600a.7.700 0 1 0 .01 0z"/><path d="M0 5.400 1.600 6.500V10H0zM2.600 7.200 6.200 9.500 5.200 10H2.900z"/></svg>
<div class="a nm"><span id="k_p25" style="position:relative;letter-spacing:-0.166px;left:-0.18px;">Text Palette</span></div>
<div class="a th" style="left:204px">
<i style="left:0px;top:0px;background:#f600ff"></i>
<i style="left:8px;top:0px;background:#0c4808"></i>
<i style="left:16px;top:0px;background:#080848"></i>
<i style="left:24px;top:0px;background:#900808"></i>
<i style="left:32px;top:0px;background:#209010"></i>
<i style="left:40px;top:0px;background:#983860"></i>
<i style="left:48px;top:0px;background:#f82850"></i>
<i style="left:56px;top:0px;background:#80a080"></i>
<i style="left:0px;top:8px;background:#80e070"></i>
<i style="left:8px;top:8px;background:#3808b0"></i>
<i style="left:16px;top:8px;background:#2850ff"></i>
<i style="left:24px;top:8px;background:#40acff"></i>
<i style="left:32px;top:8px;background:#40c8ff"></i>
<i style="left:40px;top:8px;background:#ffd0ff"></i>
<i style="left:48px;top:8px;background:#d0ffff"></i>
<i style="left:56px;top:8px;background:#ffffff"></i>
</div></div>
<div class="a row" style="top:681px">
<svg class="a ic" viewBox="0 0 10 10"><path fill-rule="evenodd" d="M2.200 0 10 5 7.600 9-.2 4zM2.300 1.600a.7.700 0 1 0 .01 0z"/><path d="M0 5.400 1.600 6.500V10H0zM2.600 7.200 6.200 9.500 5.200 10H2.900z"/></svg>
<div class="a nm"><span id="k_p26" style="position:relative;letter-spacing:-0.041px;left:-0.18px;">TilemapA Palette</span></div>
<div class="a th" style="left:204px">
<i style="left:0px;top:0px;background:#f600ff"></i>
<i style="left:8px;top:0px;background:#484848"></i>
<i style="left:16px;top:0px;background:#900838"></i>
<i style="left:24px;top:0px;background:#683868"></i>
<i style="left:32px;top:0px;background:#886068"></i>
<i style="left:40px;top:0px;background:#b03860"></i>
<i style="left:48px;top:0px;background:#b83860"></i>
<i style="left:56px;top:0px;background:#c85860"></i>
<i style="left:0px;top:8px;background:#e09060"></i>
<i style="left:8px;top:8px;background:#c8a860"></i>
<i style="left:16px;top:8px;background:#e0a880"></i>
<i style="left:24px;top:8px;background:#e0b870"></i>
<i style="left:32px;top:8px;background:#ffc838"></i>
<i style="left:40px;top:8px;background:#6888a8"></i>
<i style="left:48px;top:8px;background:#7898a0"></i>
<i style="left:56px;top:8px;background:#60ffa8"></i>
</div></div>
<div class="a row" style="top:706px">
<svg class="a ic" viewBox="0 0 10 10"><path fill-rule="evenodd" d="M2.200 0 10 5 7.600 9-.2 4zM2.300 1.600a.7.700 0 1 0 .01 0z"/><path d="M0 5.400 1.600 6.500V10H0zM2.600 7.200 6.200 9.500 5.200 10H2.900z"/></svg>
<div class="a nm"><span id="k_p27" style="position:relative;letter-spacing:-0.113px;left:-0.18px;">TilemapB Palette</span></div>
<div class="a th" style="left:204px">
<i style="left:0px;top:0px;background:#f600ff"></i>
<i style="left:8px;top:0px;background:#484848"></i>
<i style="left:16px;top:0px;background:#683868"></i>
<i style="left:24px;top:0px;background:#686868"></i>
<i style="left:32px;top:0px;background:#886068"></i>
<i style="left:40px;top:0px;background:#a08060"></i>
<i style="left:48px;top:0px;background:#ffff10"></i>
<i style="left:56px;top:0px;background:#f8c020"></i>
<i style="left:0px;top:8px;background:#c8a860"></i>
<i style="left:8px;top:8px;background:#e0b858"></i>
<i style="left:16px;top:8px;background:#e0d850"></i>
<i style="left:24px;top:8px;background:#5838b0"></i>
<i style="left:32px;top:8px;background:#a080d0"></i>
<i style="left:40px;top:8px;background:#e0b8a0"></i>
<i style="left:48px;top:8px;background:#ffc090"></i>
<i style="left:56px;top:8px;background:#ffffa0"></i>
</div></div>
<div class="a row" style="top:731px">
<svg class="a ic" viewBox="0 0 10 10"><path fill-rule="evenodd" d="M2.200 0 10 5 7.600 9-.2 4zM2.300 1.600a.7.700 0 1 0 .01 0z"/><path d="M0 5.400 1.600 6.500V10H0zM2.600 7.200 6.200 9.500 5.200 10H2.900z"/></svg>
<div class="a nm"><span id="k_p28" style="position:relative;letter-spacing:-0.141px;left:-0.18px;">TilemapC Palette</span></div>
<div class="a th" style="left:204px">
<i style="left:0px;top:0px;background:#f600ff"></i>
<i style="left:8px;top:0px;background:#484848"></i>
<i style="left:16px;top:0px;background:#686030"></i>
<i style="left:24px;top:0px;background:#68a058"></i>
<i style="left:32px;top:0px;background:#3c68b0"></i>
<i style="left:40px;top:0px;background:#5880a0"></i>
<i style="left:48px;top:0px;background:#58b098"></i>
<i style="left:56px;top:0px;background:#58b098"></i>
<i style="left:0px;top:8px;background:#80d0c8"></i>
<i style="left:8px;top:8px;background:#60ffb0"></i>
<i style="left:16px;top:8px;background:#40a0e0"></i>
<i style="left:24px;top:8px;background:#60b0d8"></i>
<i style="left:32px;top:8px;background:#b0d0a0"></i>
<i style="left:40px;top:8px;background:#80ffb0"></i>
<i style="left:48px;top:8px;background:#ffffa0"></i>
<i style="left:56px;top:8px;background:#90d8d0"></i>
</div></div>
<div class="a row" style="top:756px">
<svg class="a ic" viewBox="0 0 10 10"><path fill-rule="evenodd" d="M2.200 0 10 5 7.600 9-.2 4zM2.300 1.600a.7.700 0 1 0 .01 0z"/><path d="M0 5.400 1.600 6.500V10H0zM2.600 7.200 6.200 9.500 5.200 10H2.900z"/></svg>
<div class="a nm"><span id="k_p29" style="position:relative;letter-spacing:-0.093px;left:-0.18px;">TilemapD Palette</span></div>
<div class="a th" style="left:204px">
<i style="left:0px;top:0px;background:#f600ff"></i>
<i style="left:8px;top:0px;background:#380838"></i>
<i style="left:16px;top:0px;background:#683860"></i>
<i style="left:24px;top:0px;background:#a08030"></i>
<i style="left:32px;top:0px;background:#a09830"></i>
<i style="left:40px;top:0px;background:#a0b030"></i>
<i style="left:48px;top:0px;background:#b8b028"></i>
<i style="left:56px;top:0px;background:#ffff10"></i>
<i style="left:0px;top:8px;background:#c8c080"></i>
<i style="left:8px;top:8px;background:#b0ff70"></i>
<i style="left:16px;top:8px;background:#d0d050"></i>
<i style="left:24px;top:8px;background:#d0d050"></i>
<i style="left:32px;top:8px;background:#ffff48"></i>
<i style="left:40px;top:8px;background:#ffff48"></i>
<i style="left:48px;top:8px;background:#9060a0"></i>
<i style="left:56px;top:8px;background:#d8d8a8"></i>
</div></div>
</div><div id="sideline" class="a"></div><div id="handle" class="a"></div>
<div class="a" style="left:390px;top:107.500px;font-size:25.500px;line-height:32px;font-weight:bold;color:#f0f0f0"><span id="k_h1" style="position:relative;letter-spacing:0.502px;left:-0.35px;">bg4 Palette</span></div>
<div class="a" style="left:547px;top:114.500px;font-size:10px;line-height:13px;color:#fff"><span id="k_ren" style="position:relative;left:-0.80px;display:inline-block;transform:scaleX(0.9353);transform-origin:0 50%;">Rename</span></div>
<div class="a" style="left:387px;top:167px;width:72px;height:72px;border:4px solid #c82a60;border-radius:3px"></div>
<div class="a sw" style="left:391px;top:171px;background:#f600ff"></div>
<div class="a sw" style="left:571px;top:171px;background:#3c5a96"></div>
<div class="a sw" style="left:751px;top:171px;background:#4478b4"></div>
<div class="a sw" style="left:931px;top:171px;background:#5e78b4"></div>
<div class="a sw" style="left:1111px;top:171px;background:#2c90b0"></div>
<div class="a sw" style="left:1291px;top:171px;background:#5a9090"></div>
<div class="a sw" style="left:1471px;top:171px;background:#3090d2"></div>
<div class="a sw" style="left:1651px;top:171px;background:#3090d2"></div>
<div class="a sw" style="left:391px;top:255px;background:#4890ff"></div>
<div class="a sw" style="left:571px;top:255px;background:#4890d2"></div>
<div class="a sw" style="left:751px;top:255px;background:#6090ff"></div>
<div class="a sw" style="left:931px;top:255px;background:#68acff"></div>
<div class="a sw" style="left:1111px;top:255px;background:#80acff"></div>
<div class="a sw" style="left:1291px;top:255px;background:#a0d0ff"></div>
<div class="a sw" style="left:1471px;top:255px;background:#a0d0ff"></div>
<div class="a sw" style="left:1651px;top:255px;background:#a0ffff"></div>
<div class="a lbl" style="left:390px;top:340px"><span id="k_l00" style="position:relative;letter-spacing:-0.162px;left:-0.17px;">Red (0-7)</span></div>
<div class="a inp" style="left:391px;top:359px"><span>0</span></div>
<div class="a sl" style="left:391px;top:392px"><i style="left:0.00px;width:45.30px;background:#000000"></i><i style="left:45.00px;width:45.30px;background:#320000"></i><i style="left:90.00px;width:45.30px;background:#530000"></i><i style="left:135.00px;width:45.30px;background:#6f0000"></i><i style="left:180.00px;width:45.30px;background:#8a0000"></i><i style="left:225.00px;width:45.30px;background:#a50000"></i><i style="left:270.00px;width:45.30px;background:#c60000"></i><i style="left:315.00px;width:45.30px;background:#f50000"></i></div>
<div class="a kn" style="left:386px;top:389px;background:#000"></div>
<div class="a lbl" style="left:390px;top:463px"><span id="k_l01" style="position:relative;letter-spacing:-0.009px;left:-0.17px;">Hue (0-360)</span></div>
<div class="a inp" style="left:391px;top:482px"><span>0</span></div>
<div class="a sl" style="left:391px;top:515px"><i style="left:0px;width:3px;background:#f50000"></i><i style="left:3px;width:6px;background:#f51900"></i><i style="left:9px;width:6px;background:#f53300"></i><i style="left:15px;width:6px;background:#f64d00"></i><i style="left:21px;width:6px;background:#f66600"></i><i style="left:27px;width:6px;background:#f78000"></i><i style="left:33px;width:6px;background:#f89900"></i><i style="left:39px;width:6px;background:#fab200"></i><i style="left:45px;width:6px;background:#fbcc00"></i><i style="left:51px;width:6px;background:#fde500"></i><i style="left:57px;width:6px;background:#ffff00"></i><i style="left:63px;width:6px;background:#e8ff00"></i><i style="left:69px;width:6px;background:#d2ff00"></i><i style="left:75px;width:6px;background:#bbff00"></i><i style="left:81px;width:6px;background:#a6ff00"></i><i style="left:87px;width:6px;background:#92ff00"></i><i style="left:93px;width:6px;background:#7fff00"></i><i style="left:99px;width:6px;background:#6fff00"></i><i style="left:105px;width:6px;background:#62ff00"></i><i style="left:111px;width:6px;background:#59ff00"></i><i style="left:117px;width:6px;background:#55ff00"></i><i style="left:123px;width:6px;background:#55ff00"></i><i style="left:129px;width:6px;background:#55ff0f"></i><i style="left:135px;width:6px;background:#56ff3d"></i><i style="left:141px;width:6px;background:#56ff5d"></i><i style="left:147px;width:6px;background:#56ff7a"></i><i style="left:153px;width:6px;background:#57ff96"></i><i style="left:159px;width:6px;background:#58ffb1"></i><i style="left:165px;width:6px;background:#59ffcc"></i><i style="left:171px;width:6px;background:#5affe7"></i><i style="left:177px;width:6px;background:#5cffff"></i><i style="left:183px;width:6px;background:#53e6ff"></i><i style="left:189px;width:6px;background:#4bcdff"></i><i style="left:195px;width:6px;background:#43b3ff"></i><i style="left:201px;width:6px;background:#3b9aff"></i><i style="left:207px;width:6px;background:#3481ff"></i><i style="left:213px;width:6px;background:#2e68ff"></i><i style="left:219px;width:6px;background:#294fff"></i><i style="left:225px;width:6px;background:#2536ff"></i><i style="left:231px;width:6px;background:#2220ff"></i><i style="left:237px;width:6px;background:#210eff"></i><i style="left:243px;width:6px;background:#2b0eff"></i><i style="left:249px;width:6px;background:#3c0eff"></i><i style="left:255px;width:6px;background:#510eff"></i><i style="left:261px;width:6px;background:#670eff"></i><i style="left:267px;width:6px;background:#7f0eff"></i><i style="left:273px;width:6px;background:#960eff"></i><i style="left:279px;width:6px;background:#ae0eff"></i><i style="left:285px;width:6px;background:#c60eff"></i><i style="left:291px;width:6px;background:#df0eff"></i><i style="left:297px;width:6px;background:#f70eff"></i><i style="left:303px;width:6px;background:#f60be8"></i><i style="left:309px;width:6px;background:#f609ce"></i><i style="left:315px;width:6px;background:#f606b3"></i><i style="left:321px;width:6px;background:#f60598"></i><i style="left:327px;width:6px;background:#f5037d"></i><i style="left:333px;width:6px;background:#f50261"></i><i style="left:339px;width:6px;background:#f50143"></i><i style="left:345px;width:6px;background:#f50020"></i><i style="left:351px;width:6px;background:#f50000"></i><i style="left:357px;width:3px;background:#f50000"></i></div>
<div class="a kn" style="left:386px;top:512px;background:#f50000"></div>
<div class="a lbl" style="left:870px;top:340px"><span id="k_l10" style="position:relative;letter-spacing:-0.101px;left:0.17px;">Green (0-7)</span></div>
<div class="a inp" style="left:871px;top:359px"><span>0</span></div>
<div class="a sl" style="left:871px;top:392px"><i style="left:0.00px;width:45.30px;background:#000000"></i><i style="left:45.00px;width:45.30px;background:#0a3400"></i><i style="left:90.00px;width:45.30px;background:#175700"></i><i style="left:135.00px;width:45.30px;background:#227400"></i><i style="left:180.00px;width:45.30px;background:#2c9000"></i><i style="left:225.00px;width:45.30px;background:#36ac00"></i><i style="left:270.00px;width:45.30px;background:#43ce00"></i><i style="left:315.00px;width:45.30px;background:#55ff00"></i></div>
<div class="a kn" style="left:866px;top:389px;background:#000"></div>
<div class="a lbl" style="left:870px;top:463px"><span id="k_l11" style="position:relative;letter-spacing:0.003px;left:0.09px;">Saturation (0-7)</span></div>
<div class="a inp" style="left:871px;top:482px"><span>0</span></div>
<div class="a sl" style="left:871px;top:515px"><i style="left:0.00px;width:360.30px;background:#000"></i></div>
<div class="a kn" style="left:866px;top:512px;background:#000"></div>
<div class="a lbl" style="left:1350px;top:340px"><span id="k_l20" style="position:relative;letter-spacing:-0.050px;left:-0.17px;">Blue (0-7)</span></div>
<div class="a inp" style="left:1351px;top:359px"><span>0</span></div>
<div class="a sl" style="left:1351px;top:392px"><i style="left:0.00px;width:45.30px;background:#000000"></i><i style="left:45.00px;width:45.30px;background:#020035"></i><i style="left:90.00px;width:45.30px;background:#050159"></i><i style="left:135.00px;width:45.30px;background:#090377"></i><i style="left:180.00px;width:45.30px;background:#0e0493"></i><i style="left:225.00px;width:45.30px;background:#1206b0"></i><i style="left:270.00px;width:45.30px;background:#1809d3"></i><i style="left:315.00px;width:45.30px;background:#210eff"></i></div>
<div class="a kn" style="left:1346px;top:389px;background:#000"></div>
<div class="a lbl" style="left:1350px;top:463px"><span id="k_l21" style="position:relative;letter-spacing:-0.030px;left:-0.17px;">Brightness (0-7)</span></div>
<div class="a inp" style="left:1351px;top:482px"><span>0</span></div>
<div class="a sl" style="left:1351px;top:515px"><i style="left:0.00px;width:45.30px;background:#000000"></i><i style="left:45.00px;width:45.30px;background:#353434"></i><i style="left:90.00px;width:45.30px;background:#585757"></i><i style="left:135.00px;width:45.30px;background:#757474"></i><i style="left:180.00px;width:45.30px;background:#919090"></i><i style="left:225.00px;width:45.30px;background:#adacac"></i><i style="left:270.00px;width:45.30px;background:#d0cece"></i><i style="left:315.00px;width:45.30px;background:#ffffff"></i></div>
<div class="a kn" style="left:1346px;top:512px;background:#000"></div>
<div class="a lbl" style="left:390px;top:586px"><span id="k_hex" style="position:relative;letter-spacing:-0.098px;left:-0.17px;">Hex Color (Find Closest Match)</span></div>
<div class="a" style="left:391px;top:605px;width:1420px;height:42px;background:#000;border:1px solid #414141"></div>
<div class="a" style="left:401px;top:618.700px;font-size:14px;line-height:17px;color:#6a6a6a"><span id="k_hexv" style="position:relative;letter-spacing:-0.137px;left:0.78px;">#000000</span></div>
<div class="a" style="left:391px;top:657px;width:100px;height:28px;background:#6b6e70;border:1px solid #3b3b3b"></div>
<div class="a" style="left:401px;top:664px;font-size:11px;line-height:14px;color:#fff"><span id="k_rm" style="position:relative;letter-spacing:0.085px;left:0.05px;">Remove Palette</span></div>
<div class="a" style="left:390px;top:703px;font-size:19.500px;line-height:26px;font-weight:bold;color:#f0f0f0"><span id="k_h2" style="position:relative;letter-spacing:0.009px;left:0.08px;">MD Colors</span></div>
<div class="a" style="left:399px;top:743px;width:24px;height:24px;border:3px solid #e8306c;border-radius:4px"></div>
<div class="a g" style="left:401px;top:745px;background:#000000"></div>
<div class="a g" style="left:423px;top:745px;background:#0a3400"></div>
<div class="a g" style="left:445px;top:745px;background:#175700"></div>
<div class="a g" style="left:467px;top:745px;background:#227400"></div>
<div class="a g" style="left:489px;top:745px;background:#2c9000"></div>
<div class="a g" style="left:511px;top:745px;background:#36ac00"></div>
<div class="a g" style="left:533px;top:745px;background:#43ce00"></div>
<div class="a g" style="left:555px;top:745px;background:#55ff00"></div>
<div class="a g" style="left:577px;top:745px;background:#320000"></div>
<div class="a g" style="left:599px;top:745px;background:#343400"></div>
<div class="a g" style="left:621px;top:745px;background:#385700"></div>
<div class="a g" style="left:643px;top:745px;background:#3d7400"></div>
<div class="a g" style="left:665px;top:745px;background:#439000"></div>
<div class="a g" style="left:687px;top:745px;background:#4aac00"></div>
<div class="a g" style="left:709px;top:745px;background:#53ce00"></div>
<div class="a g" style="left:731px;top:745px;background:#62ff00"></div>
<div class="a g" style="left:753px;top:745px;background:#530000"></div>
<div class="a g" style="left:775px;top:745px;background:#553400"></div>
<div class="a g" style="left:797px;top:745px;background:#575700"></div>
<div class="a g" style="left:819px;top:745px;background:#5a7400"></div>
<div class="a g" style="left:841px;top:745px;background:#5e9000"></div>
<div class="a g" style="left:863px;top:745px;background:#63ac00"></div>
<div class="a g" style="left:885px;top:745px;background:#6ace00"></div>
<div class="a g" style="left:907px;top:745px;background:#75ff00"></div>
<div class="a g" style="left:929px;top:745px;background:#6f0000"></div>
<div class="a g" style="left:951px;top:745px;background:#703400"></div>
<div class="a g" style="left:973px;top:745px;background:#725700"></div>
<div class="a g" style="left:995px;top:745px;background:#747400"></div>
<div class="a g" style="left:1017px;top:745px;background:#779000"></div>
<div class="a g" style="left:1039px;top:745px;background:#7bac00"></div>
<div class="a g" style="left:1061px;top:745px;background:#80ce00"></div>
<div class="a g" style="left:1083px;top:745px;background:#89ff00"></div>
<div class="a g" style="left:1105px;top:745px;background:#8a0000"></div>
<div class="a g" style="left:1127px;top:745px;background:#8b3400"></div>
<div class="a g" style="left:1149px;top:745px;background:#8c5700"></div>
<div class="a g" style="left:1171px;top:745px;background:#8e7400"></div>
<div class="a g" style="left:1193px;top:745px;background:#909000"></div>
<div class="a g" style="left:1215px;top:745px;background:#93ac00"></div>
<div class="a g" style="left:1237px;top:745px;background:#97ce00"></div>
<div class="a g" style="left:1259px;top:745px;background:#9fff00"></div>
<div class="a g" style="left:1281px;top:745px;background:#a50000"></div>
<div class="a g" style="left:1303px;top:745px;background:#a63400"></div>
<div class="a g" style="left:1325px;top:745px;background:#a75700"></div>
<div class="a g" style="left:1347px;top:745px;background:#a87400"></div>
<div class="a g" style="left:1369px;top:745px;background:#aa9000"></div>
<div class="a g" style="left:1391px;top:745px;background:#acac00"></div>
<div class="a g" style="left:1413px;top:745px;background:#b0ce00"></div>
<div class="a g" style="left:1435px;top:745px;background:#b6ff00"></div>
<div class="a g" style="left:1457px;top:745px;background:#c60000"></div>
<div class="a g" style="left:1479px;top:745px;background:#c63400"></div>
<div class="a g" style="left:1501px;top:745px;background:#c75700"></div>
<div class="a g" style="left:1523px;top:745px;background:#c87400"></div>
<div class="a g" style="left:1545px;top:745px;background:#ca9000"></div>
<div class="a g" style="left:1567px;top:745px;background:#ccac00"></div>
<div class="a g" style="left:1589px;top:745px;background:#cece00"></div>
<div class="a g" style="left:1611px;top:745px;background:#d3ff00"></div>
<div class="a g" style="left:1633px;top:745px;background:#f50000"></div>
<div class="a g" style="left:1655px;top:745px;background:#f53400"></div>
<div class="a g" style="left:1677px;top:745px;background:#f65700"></div>
<div class="a g" style="left:1699px;top:745px;background:#f77400"></div>
<div class="a g" style="left:1721px;top:745px;background:#f89000"></div>
<div class="a g" style="left:1743px;top:745px;background:#f9ac00"></div>
<div class="a g" style="left:1765px;top:745px;background:#fcce00"></div>
<div class="a g" style="left:1787px;top:745px;background:#ffff00"></div>
<div class="a g" style="left:401px;top:770px;background:#020035"></div>
<div class="a g" style="left:423px;top:770px;background:#0c3435"></div>
<div class="a g" style="left:445px;top:770px;background:#185733"></div>
<div class="a g" style="left:467px;top:770px;background:#227431"></div>
<div class="a g" style="left:489px;top:770px;background:#2d902e"></div>
<div class="a g" style="left:511px;top:770px;background:#37ac2b"></div>
<div class="a g" style="left:533px;top:770px;background:#43ce24"></div>
<div class="a g" style="left:555px;top:770px;background:#55ff12"></div>
<div class="a g" style="left:577px;top:770px;background:#320035"></div>
<div class="a g" style="left:599px;top:770px;background:#353434"></div>
<div class="a g" style="left:621px;top:770px;background:#395733"></div>
<div class="a g" style="left:643px;top:770px;background:#3e7430"></div>
<div class="a g" style="left:665px;top:770px;background:#44902e"></div>
<div class="a g" style="left:687px;top:770px;background:#4aac2a"></div>
<div class="a g" style="left:709px;top:770px;background:#54ce23"></div>
<div class="a g" style="left:731px;top:770px;background:#62ff10"></div>
<div class="a g" style="left:753px;top:770px;background:#530034"></div>
<div class="a g" style="left:775px;top:770px;background:#553433"></div>
<div class="a g" style="left:797px;top:770px;background:#575731"></div>
<div class="a g" style="left:819px;top:770px;background:#5a742f"></div>
<div class="a g" style="left:841px;top:770px;background:#5e902d"></div>
<div class="a g" style="left:863px;top:770px;background:#63ac29"></div>
<div class="a g" style="left:885px;top:770px;background:#6ace22"></div>
<div class="a g" style="left:907px;top:770px;background:#75ff0d"></div>
<div class="a g" style="left:929px;top:770px;background:#6f0033"></div>
<div class="a g" style="left:951px;top:770px;background:#703432"></div>
<div class="a g" style="left:973px;top:770px;background:#725730"></div>
<div class="a g" style="left:995px;top:770px;background:#74742e"></div>
<div class="a g" style="left:1017px;top:770px;background:#77902b"></div>
<div class="a g" style="left:1039px;top:770px;background:#7bac27"></div>
<div class="a g" style="left:1061px;top:770px;background:#80ce1f"></div>
<div class="a g" style="left:1083px;top:770px;background:#89ff08"></div>
<div class="a g" style="left:1105px;top:770px;background:#8a0031"></div>
<div class="a g" style="left:1127px;top:770px;background:#8b3430"></div>
<div class="a g" style="left:1149px;top:770px;background:#8c572e"></div>
<div class="a g" style="left:1171px;top:770px;background:#8e742c"></div>
<div class="a g" style="left:1193px;top:770px;background:#909029"></div>
<div class="a g" style="left:1215px;top:770px;background:#93ac25"></div>
<div class="a g" style="left:1237px;top:770px;background:#97ce1d"></div>
<div class="a g" style="left:1259px;top:770px;background:#9fff02"></div>
<div class="a g" style="left:1281px;top:770px;background:#a5002e"></div>
<div class="a g" style="left:1303px;top:770px;background:#a6342d"></div>
<div class="a g" style="left:1325px;top:770px;background:#a7572c"></div>
<div class="a g" style="left:1347px;top:770px;background:#a87429"></div>
<div class="a g" style="left:1369px;top:770px;background:#aa9026"></div>
<div class="a g" style="left:1391px;top:770px;background:#acac21"></div>
<div class="a g" style="left:1413px;top:770px;background:#b0ce18"></div>
<div class="a g" style="left:1435px;top:770px;background:#b6ff00"></div>
<div class="a g" style="left:1457px;top:770px;background:#c6002b"></div>
<div class="a g" style="left:1479px;top:770px;background:#c6342a"></div>
<div class="a g" style="left:1501px;top:770px;background:#c75728"></div>
<div class="a g" style="left:1523px;top:770px;background:#c87425"></div>
<div class="a g" style="left:1545px;top:770px;background:#ca9021"></div>
<div class="a g" style="left:1567px;top:770px;background:#ccac1c"></div>
<div class="a g" style="left:1589px;top:770px;background:#cece10"></div>
<div class="a g" style="left:1611px;top:770px;background:#d4ff00"></div>
<div class="a g" style="left:1633px;top:770px;background:#f50022"></div>
<div class="a g" style="left:1655px;top:770px;background:#f53421"></div>
<div class="a g" style="left:1677px;top:770px;background:#f6571e"></div>
<div class="a g" style="left:1699px;top:770px;background:#f7741b"></div>
<div class="a g" style="left:1721px;top:770px;background:#f89015"></div>
<div class="a g" style="left:1743px;top:770px;background:#f9ac0c"></div>
<div class="a g" style="left:1765px;top:770px;background:#fcce00"></div>
<div class="a g" style="left:1787px;top:770px;background:#ffff00"></div>
<div class="a g" style="left:401px;top:795px;background:#050159"></div>
<div class="a g" style="left:423px;top:795px;background:#0e3459"></div>
<div class="a g" style="left:445px;top:795px;background:#1a5758"></div>
<div class="a g" style="left:467px;top:795px;background:#247457"></div>
<div class="a g" style="left:489px;top:795px;background:#2e9055"></div>
<div class="a g" style="left:511px;top:795px;background:#38ac54"></div>
<div class="a g" style="left:533px;top:795px;background:#44ce51"></div>
<div class="a g" style="left:555px;top:795px;background:#56ff4b"></div>
<div class="a g" style="left:577px;top:795px;background:#330159"></div>
<div class="a g" style="left:599px;top:795px;background:#353458"></div>
<div class="a g" style="left:621px;top:795px;background:#395758"></div>
<div class="a g" style="left:643px;top:795px;background:#3e7456"></div>
<div class="a g" style="left:665px;top:795px;background:#449055"></div>
<div class="a g" style="left:687px;top:795px;background:#4bac53"></div>
<div class="a g" style="left:709px;top:795px;background:#54ce50"></div>
<div class="a g" style="left:731px;top:795px;background:#63ff4a"></div>
<div class="a g" style="left:753px;top:795px;background:#540158"></div>
<div class="a g" style="left:775px;top:795px;background:#553458"></div>
<div class="a g" style="left:797px;top:795px;background:#585757"></div>
<div class="a g" style="left:819px;top:795px;background:#5b7456"></div>
<div class="a g" style="left:841px;top:795px;background:#5f9055"></div>
<div class="a g" style="left:863px;top:795px;background:#63ac53"></div>
<div class="a g" style="left:885px;top:795px;background:#6ace50"></div>
<div class="a g" style="left:907px;top:795px;background:#75ff4a"></div>
<div class="a g" style="left:929px;top:795px;background:#700158"></div>
<div class="a g" style="left:951px;top:795px;background:#713457"></div>
<div class="a g" style="left:973px;top:795px;background:#725756"></div>
<div class="a g" style="left:995px;top:795px;background:#757455"></div>
<div class="a g" style="left:1017px;top:795px;background:#789054"></div>
<div class="a g" style="left:1039px;top:795px;background:#7bac52"></div>
<div class="a g" style="left:1061px;top:795px;background:#80ce4f"></div>
<div class="a g" style="left:1083px;top:795px;background:#89ff49"></div>
<div class="a g" style="left:1105px;top:795px;background:#8a0157"></div>
<div class="a g" style="left:1127px;top:795px;background:#8b3456"></div>
<div class="a g" style="left:1149px;top:795px;background:#8d5755"></div>
<div class="a g" style="left:1171px;top:795px;background:#8e7454"></div>
<div class="a g" style="left:1193px;top:795px;background:#919053"></div>
<div class="a g" style="left:1215px;top:795px;background:#93ac51"></div>
<div class="a g" style="left:1237px;top:795px;background:#98ce4e"></div>
<div class="a g" style="left:1259px;top:795px;background:#9fff48"></div>
<div class="a g" style="left:1281px;top:795px;background:#a50155"></div>
<div class="a g" style="left:1303px;top:795px;background:#a63455"></div>
<div class="a g" style="left:1325px;top:795px;background:#a75754"></div>
<div class="a g" style="left:1347px;top:795px;background:#a87453"></div>
<div class="a g" style="left:1369px;top:795px;background:#aa9052"></div>
<div class="a g" style="left:1391px;top:795px;background:#adac50"></div>
<div class="a g" style="left:1413px;top:795px;background:#b0ce4d"></div>
<div class="a g" style="left:1435px;top:795px;background:#b6ff46"></div>
<div class="a g" style="left:1457px;top:795px;background:#c60154"></div>
<div class="a g" style="left:1479px;top:795px;background:#c73453"></div>
<div class="a g" style="left:1501px;top:795px;background:#c75752"></div>
<div class="a g" style="left:1523px;top:795px;background:#c97451"></div>
<div class="a g" style="left:1545px;top:795px;background:#ca9050"></div>
<div class="a g" style="left:1567px;top:795px;background:#ccac4e"></div>
<div class="a g" style="left:1589px;top:795px;background:#cfce4a"></div>
<div class="a g" style="left:1611px;top:795px;background:#d4ff44"></div>
<div class="a g" style="left:1633px;top:795px;background:#f50150"></div>
<div class="a g" style="left:1655px;top:795px;background:#f6344f"></div>
<div class="a g" style="left:1677px;top:795px;background:#f6574f"></div>
<div class="a g" style="left:1699px;top:795px;background:#f7744d"></div>
<div class="a g" style="left:1721px;top:795px;background:#f8904c"></div>
<div class="a g" style="left:1743px;top:795px;background:#faac4a"></div>
<div class="a g" style="left:1765px;top:795px;background:#fcce46"></div>
<div class="a g" style="left:1787px;top:795px;background:#ffff3f"></div>
<div class="a g" style="left:401px;top:820px;background:#090377"></div>
<div class="a g" style="left:423px;top:820px;background:#113576"></div>
<div class="a g" style="left:445px;top:820px;background:#1c5776"></div>
<div class="a g" style="left:467px;top:820px;background:#257475"></div>
<div class="a g" style="left:489px;top:820px;background:#2f9074"></div>
<div class="a g" style="left:511px;top:820px;background:#38ac73"></div>
<div class="a g" style="left:533px;top:820px;background:#45ce71"></div>
<div class="a g" style="left:555px;top:820px;background:#56ff6d"></div>
<div class="a g" style="left:577px;top:820px;background:#340376"></div>
<div class="a g" style="left:599px;top:820px;background:#363576"></div>
<div class="a g" style="left:621px;top:820px;background:#3a5776"></div>
<div class="a g" style="left:643px;top:820px;background:#3f7475"></div>
<div class="a g" style="left:665px;top:820px;background:#459074"></div>
<div class="a g" style="left:687px;top:820px;background:#4cac73"></div>
<div class="a g" style="left:709px;top:820px;background:#55ce71"></div>
<div class="a g" style="left:731px;top:820px;background:#63ff6d"></div>
<div class="a g" style="left:753px;top:820px;background:#540376"></div>
<div class="a g" style="left:775px;top:820px;background:#563576"></div>
<div class="a g" style="left:797px;top:820px;background:#585775"></div>
<div class="a g" style="left:819px;top:820px;background:#5b7474"></div>
<div class="a g" style="left:841px;top:820px;background:#5f9074"></div>
<div class="a g" style="left:863px;top:820px;background:#64ac72"></div>
<div class="a g" style="left:885px;top:820px;background:#6bce70"></div>
<div class="a g" style="left:907px;top:820px;background:#76ff6d"></div>
<div class="a g" style="left:929px;top:820px;background:#700376"></div>
<div class="a g" style="left:951px;top:820px;background:#713575"></div>
<div class="a g" style="left:973px;top:820px;background:#735775"></div>
<div class="a g" style="left:995px;top:820px;background:#757474"></div>
<div class="a g" style="left:1017px;top:820px;background:#789073"></div>
<div class="a g" style="left:1039px;top:820px;background:#7bac72"></div>
<div class="a g" style="left:1061px;top:820px;background:#81ce70"></div>
<div class="a g" style="left:1083px;top:820px;background:#8aff6c"></div>
<div class="a g" style="left:1105px;top:820px;background:#8b0375"></div>
<div class="a g" style="left:1127px;top:820px;background:#8c3575"></div>
<div class="a g" style="left:1149px;top:820px;background:#8d5774"></div>
<div class="a g" style="left:1171px;top:820px;background:#8f7473"></div>
<div class="a g" style="left:1193px;top:820px;background:#919072"></div>
<div class="a g" style="left:1215px;top:820px;background:#94ac71"></div>
<div class="a g" style="left:1237px;top:820px;background:#98ce6f"></div>
<div class="a g" style="left:1259px;top:820px;background:#9fff6b"></div>
<div class="a g" style="left:1281px;top:820px;background:#a60374"></div>
<div class="a g" style="left:1303px;top:820px;background:#a63574"></div>
<div class="a g" style="left:1325px;top:820px;background:#a75773"></div>
<div class="a g" style="left:1347px;top:820px;background:#a97473"></div>
<div class="a g" style="left:1369px;top:820px;background:#ab9072"></div>
<div class="a g" style="left:1391px;top:820px;background:#adac70"></div>
<div class="a g" style="left:1413px;top:820px;background:#b0ce6e"></div>
<div class="a g" style="left:1435px;top:820px;background:#b6ff6a"></div>
<div class="a g" style="left:1457px;top:820px;background:#c60373"></div>
<div class="a g" style="left:1479px;top:820px;background:#c73573"></div>
<div class="a g" style="left:1501px;top:820px;background:#c85772"></div>
<div class="a g" style="left:1523px;top:820px;background:#c97471"></div>
<div class="a g" style="left:1545px;top:820px;background:#ca9070"></div>
<div class="a g" style="left:1567px;top:820px;background:#ccac6f"></div>
<div class="a g" style="left:1589px;top:820px;background:#cfce6d"></div>
<div class="a g" style="left:1611px;top:820px;background:#d4ff69"></div>
<div class="a g" style="left:1633px;top:820px;background:#f50370"></div>
<div class="a g" style="left:1655px;top:820px;background:#f63570"></div>
<div class="a g" style="left:1677px;top:820px;background:#f65770"></div>
<div class="a g" style="left:1699px;top:820px;background:#f7746f"></div>
<div class="a g" style="left:1721px;top:820px;background:#f8906e"></div>
<div class="a g" style="left:1743px;top:820px;background:#faac6c"></div>
<div class="a g" style="left:1765px;top:820px;background:#fcce6a"></div>
<div class="a g" style="left:1787px;top:820px;background:#ffff66"></div>
<div class="a g" style="left:401px;top:845px;background:#0e0493"></div>
<div class="a g" style="left:423px;top:845px;background:#153593"></div>
<div class="a g" style="left:445px;top:845px;background:#1e5893"></div>
<div class="a g" style="left:467px;top:845px;background:#277492"></div>
<div class="a g" style="left:489px;top:845px;background:#309091"></div>
<div class="a g" style="left:511px;top:845px;background:#3aac90"></div>
<div class="a g" style="left:533px;top:845px;background:#45ce8f"></div>
<div class="a g" style="left:555px;top:845px;background:#57ff8c"></div>
<div class="a g" style="left:577px;top:845px;background:#350493"></div>
<div class="a g" style="left:599px;top:845px;background:#373593"></div>
<div class="a g" style="left:621px;top:845px;background:#3b5892"></div>
<div class="a g" style="left:643px;top:845px;background:#407492"></div>
<div class="a g" style="left:665px;top:845px;background:#469091"></div>
<div class="a g" style="left:687px;top:845px;background:#4cac90"></div>
<div class="a g" style="left:709px;top:845px;background:#55ce8f"></div>
<div class="a g" style="left:731px;top:845px;background:#64ff8c"></div>
<div class="a g" style="left:753px;top:845px;background:#550493"></div>
<div class="a g" style="left:775px;top:845px;background:#573593"></div>
<div class="a g" style="left:797px;top:845px;background:#595892"></div>
<div class="a g" style="left:819px;top:845px;background:#5c7492"></div>
<div class="a g" style="left:841px;top:845px;background:#609091"></div>
<div class="a g" style="left:863px;top:845px;background:#64ac90"></div>
<div class="a g" style="left:885px;top:845px;background:#6bce8e"></div>
<div class="a g" style="left:907px;top:845px;background:#76ff8c"></div>
<div class="a g" style="left:929px;top:845px;background:#710492"></div>
<div class="a g" style="left:951px;top:845px;background:#723592"></div>
<div class="a g" style="left:973px;top:845px;background:#735892"></div>
<div class="a g" style="left:995px;top:845px;background:#767491"></div>
<div class="a g" style="left:1017px;top:845px;background:#789090"></div>
<div class="a g" style="left:1039px;top:845px;background:#7cac90"></div>
<div class="a g" style="left:1061px;top:845px;background:#81ce8e"></div>
<div class="a g" style="left:1083px;top:845px;background:#8aff8b"></div>
<div class="a g" style="left:1105px;top:845px;background:#8b0492"></div>
<div class="a g" style="left:1127px;top:845px;background:#8c3592"></div>
<div class="a g" style="left:1149px;top:845px;background:#8d5891"></div>
<div class="a g" style="left:1171px;top:845px;background:#8f7491"></div>
<div class="a g" style="left:1193px;top:845px;background:#919090"></div>
<div class="a g" style="left:1215px;top:845px;background:#94ac8f"></div>
<div class="a g" style="left:1237px;top:845px;background:#98ce8e"></div>
<div class="a g" style="left:1259px;top:845px;background:#a0ff8b"></div>
<div class="a g" style="left:1281px;top:845px;background:#a60491"></div>
<div class="a g" style="left:1303px;top:845px;background:#a73591"></div>
<div class="a g" style="left:1325px;top:845px;background:#a85891"></div>
<div class="a g" style="left:1347px;top:845px;background:#a97490"></div>
<div class="a g" style="left:1369px;top:845px;background:#ab908f"></div>
<div class="a g" style="left:1391px;top:845px;background:#adac8e"></div>
<div class="a g" style="left:1413px;top:845px;background:#b1ce8d"></div>
<div class="a g" style="left:1435px;top:845px;background:#b7ff8a"></div>
<div class="a g" style="left:1457px;top:845px;background:#c60490"></div>
<div class="a g" style="left:1479px;top:845px;background:#c73590"></div>
<div class="a g" style="left:1501px;top:845px;background:#c85890"></div>
<div class="a g" style="left:1523px;top:845px;background:#c9748f"></div>
<div class="a g" style="left:1545px;top:845px;background:#ca908e"></div>
<div class="a g" style="left:1567px;top:845px;background:#ccac8d"></div>
<div class="a g" style="left:1589px;top:845px;background:#cfce8c"></div>
<div class="a g" style="left:1611px;top:845px;background:#d4ff89"></div>
<div class="a g" style="left:1633px;top:845px;background:#f6048f"></div>
<div class="a g" style="left:1655px;top:845px;background:#f6358e"></div>
<div class="a g" style="left:1677px;top:845px;background:#f7588e"></div>
<div class="a g" style="left:1699px;top:845px;background:#f7748d"></div>
<div class="a g" style="left:1721px;top:845px;background:#f8908d"></div>
<div class="a g" style="left:1743px;top:845px;background:#faac8c"></div>
<div class="a g" style="left:1765px;top:845px;background:#fcce8a"></div>
<div class="a g" style="left:1787px;top:845px;background:#ffff87"></div>
<div class="a g" style="left:401px;top:870px;background:#1206b0"></div>
<div class="a g" style="left:423px;top:870px;background:#1835b0"></div>
<div class="a g" style="left:445px;top:870px;background:#2158af"></div>
<div class="a g" style="left:467px;top:870px;background:#2975af"></div>
<div class="a g" style="left:489px;top:870px;background:#3290ae"></div>
<div class="a g" style="left:511px;top:870px;background:#3bacae"></div>
<div class="a g" style="left:533px;top:870px;background:#47ceac"></div>
<div class="a g" style="left:555px;top:870px;background:#58ffaa"></div>
<div class="a g" style="left:577px;top:870px;background:#3706b0"></div>
<div class="a g" style="left:599px;top:870px;background:#3935b0"></div>
<div class="a g" style="left:621px;top:870px;background:#3d58af"></div>
<div class="a g" style="left:643px;top:870px;background:#4175af"></div>
<div class="a g" style="left:665px;top:870px;background:#4790ae"></div>
<div class="a g" style="left:687px;top:870px;background:#4dacad"></div>
<div class="a g" style="left:709px;top:870px;background:#56ceac"></div>
<div class="a g" style="left:731px;top:870px;background:#64ffaa"></div>
<div class="a g" style="left:753px;top:870px;background:#5606af"></div>
<div class="a g" style="left:775px;top:870px;background:#5735af"></div>
<div class="a g" style="left:797px;top:870px;background:#5a58af"></div>
<div class="a g" style="left:819px;top:870px;background:#5d75af"></div>
<div class="a g" style="left:841px;top:870px;background:#6190ae"></div>
<div class="a g" style="left:863px;top:870px;background:#65acad"></div>
<div class="a g" style="left:885px;top:870px;background:#6cceac"></div>
<div class="a g" style="left:907px;top:870px;background:#77ffaa"></div>
<div class="a g" style="left:929px;top:870px;background:#7106af"></div>
<div class="a g" style="left:951px;top:870px;background:#7235af"></div>
<div class="a g" style="left:973px;top:870px;background:#7458af"></div>
<div class="a g" style="left:995px;top:870px;background:#7675ae"></div>
<div class="a g" style="left:1017px;top:870px;background:#7990ae"></div>
<div class="a g" style="left:1039px;top:870px;background:#7cacad"></div>
<div class="a g" style="left:1061px;top:870px;background:#82ceac"></div>
<div class="a g" style="left:1083px;top:870px;background:#8bffaa"></div>
<div class="a g" style="left:1105px;top:870px;background:#8c06af"></div>
<div class="a g" style="left:1127px;top:870px;background:#8c35af"></div>
<div class="a g" style="left:1149px;top:870px;background:#8e58ae"></div>
<div class="a g" style="left:1171px;top:870px;background:#9075ae"></div>
<div class="a g" style="left:1193px;top:870px;background:#9290ad"></div>
<div class="a g" style="left:1215px;top:870px;background:#95acad"></div>
<div class="a g" style="left:1237px;top:870px;background:#99ceab"></div>
<div class="a g" style="left:1259px;top:870px;background:#a0ffa9"></div>
<div class="a g" style="left:1281px;top:870px;background:#a606ae"></div>
<div class="a g" style="left:1303px;top:870px;background:#a735ae"></div>
<div class="a g" style="left:1325px;top:870px;background:#a858ae"></div>
<div class="a g" style="left:1347px;top:870px;background:#a975ad"></div>
<div class="a g" style="left:1369px;top:870px;background:#ab90ad"></div>
<div class="a g" style="left:1391px;top:870px;background:#adacac"></div>
<div class="a g" style="left:1413px;top:870px;background:#b1ceab"></div>
<div class="a g" style="left:1435px;top:870px;background:#b7ffa9"></div>
<div class="a g" style="left:1457px;top:870px;background:#c706ae"></div>
<div class="a g" style="left:1479px;top:870px;background:#c735ad"></div>
<div class="a g" style="left:1501px;top:870px;background:#c858ad"></div>
<div class="a g" style="left:1523px;top:870px;background:#c975ad"></div>
<div class="a g" style="left:1545px;top:870px;background:#cb90ac"></div>
<div class="a g" style="left:1567px;top:870px;background:#cdacab"></div>
<div class="a g" style="left:1589px;top:870px;background:#cfceaa"></div>
<div class="a g" style="left:1611px;top:870px;background:#d4ffa8"></div>
<div class="a g" style="left:1633px;top:870px;background:#f606ac"></div>
<div class="a g" style="left:1655px;top:870px;background:#f635ac"></div>
<div class="a g" style="left:1677px;top:870px;background:#f758ac"></div>
<div class="a g" style="left:1699px;top:870px;background:#f875ab"></div>
<div class="a g" style="left:1721px;top:870px;background:#f990ab"></div>
<div class="a g" style="left:1743px;top:870px;background:#faacaa"></div>
<div class="a g" style="left:1765px;top:870px;background:#fccea9"></div>
<div class="a g" style="left:1787px;top:870px;background:#ffffa6"></div>
<div class="a g" style="left:401px;top:895px;background:#1809d3"></div>
<div class="a g" style="left:423px;top:895px;background:#1d36d2"></div>
<div class="a g" style="left:445px;top:895px;background:#2458d2"></div>
<div class="a g" style="left:467px;top:895px;background:#2c75d2"></div>
<div class="a g" style="left:489px;top:895px;background:#3491d1"></div>
<div class="a g" style="left:511px;top:895px;background:#3dadd1"></div>
<div class="a g" style="left:533px;top:895px;background:#48ced0"></div>
<div class="a g" style="left:555px;top:895px;background:#59ffce"></div>
<div class="a g" style="left:577px;top:895px;background:#3909d2"></div>
<div class="a g" style="left:599px;top:895px;background:#3b36d2"></div>
<div class="a g" style="left:621px;top:895px;background:#3f58d2"></div>
<div class="a g" style="left:643px;top:895px;background:#4375d2"></div>
<div class="a g" style="left:665px;top:895px;background:#4991d1"></div>
<div class="a g" style="left:687px;top:895px;background:#4fadd1"></div>
<div class="a g" style="left:709px;top:895px;background:#58ced0"></div>
<div class="a g" style="left:731px;top:895px;background:#66ffce"></div>
<div class="a g" style="left:753px;top:895px;background:#5709d2"></div>
<div class="a g" style="left:775px;top:895px;background:#5936d2"></div>
<div class="a g" style="left:797px;top:895px;background:#5b58d2"></div>
<div class="a g" style="left:819px;top:895px;background:#5e75d1"></div>
<div class="a g" style="left:841px;top:895px;background:#6291d1"></div>
<div class="a g" style="left:863px;top:895px;background:#66add0"></div>
<div class="a g" style="left:885px;top:895px;background:#6dced0"></div>
<div class="a g" style="left:907px;top:895px;background:#78ffce"></div>
<div class="a g" style="left:929px;top:895px;background:#7209d2"></div>
<div class="a g" style="left:951px;top:895px;background:#7336d2"></div>
<div class="a g" style="left:973px;top:895px;background:#7558d2"></div>
<div class="a g" style="left:995px;top:895px;background:#7775d1"></div>
<div class="a g" style="left:1017px;top:895px;background:#7a91d1"></div>
<div class="a g" style="left:1039px;top:895px;background:#7dadd0"></div>
<div class="a g" style="left:1061px;top:895px;background:#82cecf"></div>
<div class="a g" style="left:1083px;top:895px;background:#8bffce"></div>
<div class="a g" style="left:1105px;top:895px;background:#8c09d2"></div>
<div class="a g" style="left:1127px;top:895px;background:#8d36d2"></div>
<div class="a g" style="left:1149px;top:895px;background:#8f58d1"></div>
<div class="a g" style="left:1171px;top:895px;background:#9075d1"></div>
<div class="a g" style="left:1193px;top:895px;background:#9291d0"></div>
<div class="a g" style="left:1215px;top:895px;background:#95add0"></div>
<div class="a g" style="left:1237px;top:895px;background:#99cecf"></div>
<div class="a g" style="left:1259px;top:895px;background:#a1ffcd"></div>
<div class="a g" style="left:1281px;top:895px;background:#a709d1"></div>
<div class="a g" style="left:1303px;top:895px;background:#a836d1"></div>
<div class="a g" style="left:1325px;top:895px;background:#a958d1"></div>
<div class="a g" style="left:1347px;top:895px;background:#aa75d1"></div>
<div class="a g" style="left:1369px;top:895px;background:#ac91d0"></div>
<div class="a g" style="left:1391px;top:895px;background:#aeadd0"></div>
<div class="a g" style="left:1413px;top:895px;background:#b1cecf"></div>
<div class="a g" style="left:1435px;top:895px;background:#b8ffcd"></div>
<div class="a g" style="left:1457px;top:895px;background:#c709d1"></div>
<div class="a g" style="left:1479px;top:895px;background:#c836d1"></div>
<div class="a g" style="left:1501px;top:895px;background:#c958d0"></div>
<div class="a g" style="left:1523px;top:895px;background:#ca75d0"></div>
<div class="a g" style="left:1545px;top:895px;background:#cb91d0"></div>
<div class="a g" style="left:1567px;top:895px;background:#cdadcf"></div>
<div class="a g" style="left:1589px;top:895px;background:#d0cece"></div>
<div class="a g" style="left:1611px;top:895px;background:#d5ffcc"></div>
<div class="a g" style="left:1633px;top:895px;background:#f609d0"></div>
<div class="a g" style="left:1655px;top:895px;background:#f636cf"></div>
<div class="a g" style="left:1677px;top:895px;background:#f758cf"></div>
<div class="a g" style="left:1699px;top:895px;background:#f875cf"></div>
<div class="a g" style="left:1721px;top:895px;background:#f991ce"></div>
<div class="a g" style="left:1743px;top:895px;background:#faadce"></div>
<div class="a g" style="left:1765px;top:895px;background:#fdcecd"></div>
<div class="a g" style="left:1787px;top:895px;background:#ffffcb"></div>
<div class="a g" style="left:401px;top:920px;background:#210eff"></div>
<div class="a g" style="left:423px;top:920px;background:#2537ff"></div>
<div class="a g" style="left:445px;top:920px;background:#2b59ff"></div>
<div class="a g" style="left:467px;top:920px;background:#3175ff"></div>
<div class="a g" style="left:489px;top:920px;background:#3991ff"></div>
<div class="a g" style="left:511px;top:920px;background:#41adff"></div>
<div class="a g" style="left:533px;top:920px;background:#4bcfff"></div>
<div class="a g" style="left:555px;top:920px;background:#5cffff"></div>
<div class="a g" style="left:577px;top:920px;background:#3d0eff"></div>
<div class="a g" style="left:599px;top:920px;background:#3f37ff"></div>
<div class="a g" style="left:621px;top:920px;background:#4259ff"></div>
<div class="a g" style="left:643px;top:920px;background:#4775ff"></div>
<div class="a g" style="left:665px;top:920px;background:#4c91ff"></div>
<div class="a g" style="left:687px;top:920px;background:#52adff"></div>
<div class="a g" style="left:709px;top:920px;background:#5acfff"></div>
<div class="a g" style="left:731px;top:920px;background:#68ffff"></div>
<div class="a g" style="left:753px;top:920px;background:#5a0eff"></div>
<div class="a g" style="left:775px;top:920px;background:#5b37ff"></div>
<div class="a g" style="left:797px;top:920px;background:#5e59ff"></div>
<div class="a g" style="left:819px;top:920px;background:#6075ff"></div>
<div class="a g" style="left:841px;top:920px;background:#6491ff"></div>
<div class="a g" style="left:863px;top:920px;background:#68adff"></div>
<div class="a g" style="left:885px;top:920px;background:#6fcfff"></div>
<div class="a g" style="left:907px;top:920px;background:#7affff"></div>
<div class="a g" style="left:929px;top:920px;background:#740eff"></div>
<div class="a g" style="left:951px;top:920px;background:#7537ff"></div>
<div class="a g" style="left:973px;top:920px;background:#7759ff"></div>
<div class="a g" style="left:995px;top:920px;background:#7975ff"></div>
<div class="a g" style="left:1017px;top:920px;background:#7c91ff"></div>
<div class="a g" style="left:1039px;top:920px;background:#7fadff"></div>
<div class="a g" style="left:1061px;top:920px;background:#84cfff"></div>
<div class="a g" style="left:1083px;top:920px;background:#8dffff"></div>
<div class="a g" style="left:1105px;top:920px;background:#8e0eff"></div>
<div class="a g" style="left:1127px;top:920px;background:#8f37ff"></div>
<div class="a g" style="left:1149px;top:920px;background:#9059ff"></div>
<div class="a g" style="left:1171px;top:920px;background:#9275ff"></div>
<div class="a g" style="left:1193px;top:920px;background:#9491ff"></div>
<div class="a g" style="left:1215px;top:920px;background:#97adff"></div>
<div class="a g" style="left:1237px;top:920px;background:#9bcfff"></div>
<div class="a g" style="left:1259px;top:920px;background:#a2ffff"></div>
<div class="a g" style="left:1281px;top:920px;background:#a80eff"></div>
<div class="a g" style="left:1303px;top:920px;background:#a937ff"></div>
<div class="a g" style="left:1325px;top:920px;background:#aa59ff"></div>
<div class="a g" style="left:1347px;top:920px;background:#ab75ff"></div>
<div class="a g" style="left:1369px;top:920px;background:#ad91ff"></div>
<div class="a g" style="left:1391px;top:920px;background:#afadff"></div>
<div class="a g" style="left:1413px;top:920px;background:#b2cfff"></div>
<div class="a g" style="left:1435px;top:920px;background:#b9ffff"></div>
<div class="a g" style="left:1457px;top:920px;background:#c80eff"></div>
<div class="a g" style="left:1479px;top:920px;background:#c937ff"></div>
<div class="a g" style="left:1501px;top:920px;background:#ca59ff"></div>
<div class="a g" style="left:1523px;top:920px;background:#cb75ff"></div>
<div class="a g" style="left:1545px;top:920px;background:#cc91ff"></div>
<div class="a g" style="left:1567px;top:920px;background:#ceadff"></div>
<div class="a g" style="left:1589px;top:920px;background:#d1cfff"></div>
<div class="a g" style="left:1611px;top:920px;background:#d6ffff"></div>
<div class="a g" style="left:1633px;top:920px;background:#f70eff"></div>
<div class="a g" style="left:1655px;top:920px;background:#f737ff"></div>
<div class="a g" style="left:1677px;top:920px;background:#f859ff"></div>
<div class="a g" style="left:1699px;top:920px;background:#f975ff"></div>
<div class="a g" style="left:1721px;top:920px;background:#fa91ff"></div>
<div class="a g" style="left:1743px;top:920px;background:#fbadff"></div>
<div class="a g" style="left:1765px;top:920px;background:#fdcfff"></div>
<div class="a g" style="left:1787px;top:920px;background:#ffffff"></div>
</body></html>
